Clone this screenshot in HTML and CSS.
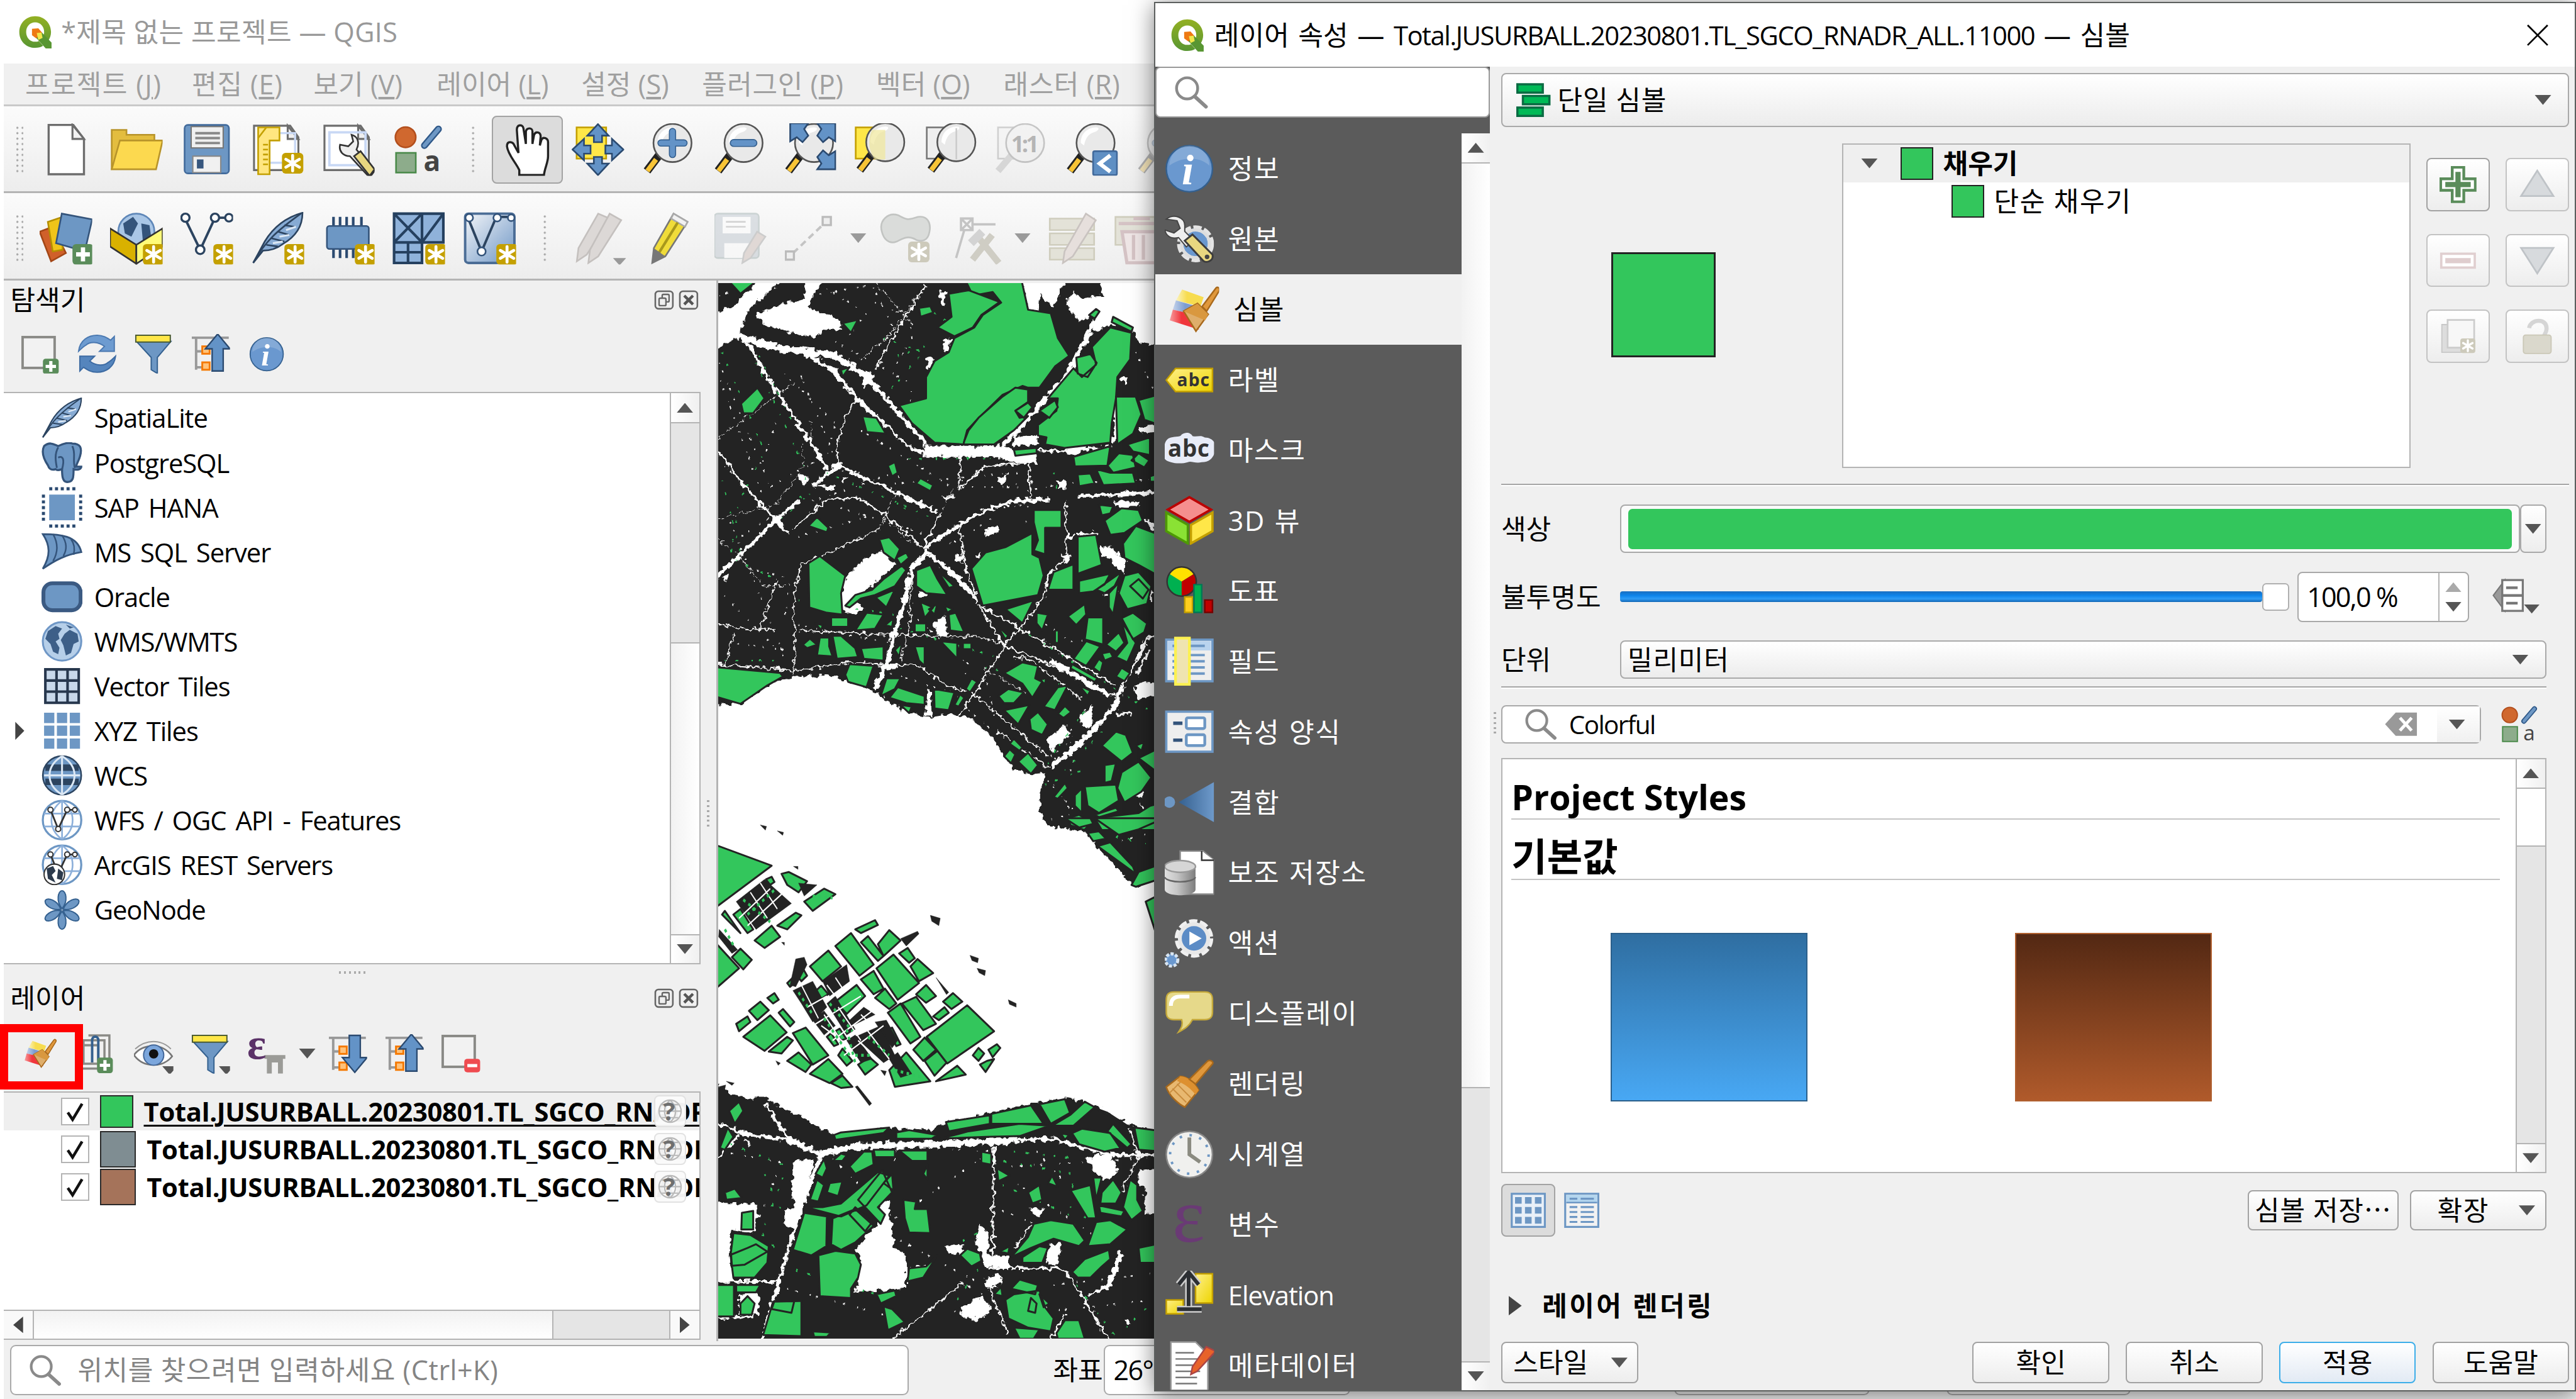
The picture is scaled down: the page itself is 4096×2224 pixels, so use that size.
FILE: index.html
```html
<!DOCTYPE html>
<html lang="ko">
<head>
<meta charset="utf-8">
<title>QGIS</title>
<link rel="stylesheet" href="styles.css">
</head>
<body>
<svg class="sprite" aria-hidden="true">
<defs>
<linearGradient id="gBlue" x1="0" y1="0" x2="1" y2="1"><stop offset="0" stop-color="#f3f5f8"/><stop offset="1" stop-color="#6f97c6"/></linearGradient>
<linearGradient id="gJoin" x1="0" y1="0" x2="1" y2="0"><stop offset="0" stop-color="#35608f"/><stop offset="1" stop-color="#6e9acb"/></linearGradient>
<linearGradient id="gCyl" x1="0" y1="0" x2="1" y2="0"><stop offset="0" stop-color="#e0e0e0"/><stop offset=".4" stop-color="#c6c6c6"/><stop offset="1" stop-color="#7d7d7d"/></linearGradient>
<linearGradient id="gQ" x1="0" y1="0" x2="0" y2="1"><stop offset="0" stop-color="#93b023"/><stop offset="1" stop-color="#589632"/></linearGradient>
<linearGradient id="gGold" x1="0" y1="0" x2="1" y2="1"><stop offset="0" stop-color="#fff08a"/><stop offset="1" stop-color="#edd400"/></linearGradient>
<linearGradient id="gY" x1="0" y1="0" x2="1" y2="0"><stop offset="0" stop-color="#fbf3c0"/><stop offset=".4" stop-color="#f7dc4f"/></linearGradient>
<linearGradient id="gB" x1="0" y1="0" x2="1" y2="0"><stop offset="0" stop-color="#c3d2ea"/><stop offset=".5" stop-color="#7d9cd0"/></linearGradient>
<linearGradient id="gR" x1="0" y1="0" x2="1" y2="0"><stop offset="0" stop-color="#f79a9c"/><stop offset=".4" stop-color="#f0363c"/></linearGradient>
<filter id="rough" x="0" y="0" width="1" height="1"><feTurbulence type="fractalNoise" baseFrequency=".11" numOctaves="2" seed="4"/><feDisplacementMap in="SourceGraphic" scale="14" xChannelSelector="R" yChannelSelector="G"/></filter>
<filter id="rough2" x="0" y="0" width="1" height="1"><feTurbulence type="fractalNoise" baseFrequency=".13" numOctaves="2" seed="9"/><feDisplacementMap in="SourceGraphic" scale="8" xChannelSelector="R" yChannelSelector="G"/></filter>
<g id="star"><rect width="13" height="12.6" rx="2.2" fill="#c4a000"/><path d="M6.500 1.600v9.400M2.400 3.900l8.200 4.800M10.600 3.900L2.400 8.700" stroke="#fff" stroke-width="1.800" stroke-linecap="round"/></g>
<g id="gstar"><rect width="13" height="12.6" rx="2.2" fill="#cdcabb"/><path d="M6.500 1.600v9.400M2.400 3.900l8.200 4.800M10.600 3.900L2.400 8.700" stroke="#fff" stroke-width="1.800" stroke-linecap="round"/></g>
<g id="plusb"><rect width="12.800" height="12.600" rx="2.200" fill="#5a8c5a"/><path d="M6.400 2v8.600M2.200 6.300h8.400" stroke="#fff" stroke-width="2.600"/></g>
<g id="lens"><path d="M11.500 18.500L3.500 29" stroke="#222" stroke-width="5"/><path d="M9 22L3.700 29" stroke="#f8c436" stroke-width="3"/><circle cx="19" cy="12" r="11.600" fill="#e9e9e9" stroke="#555" stroke-width="1"/><path d="M10 12a9 9 0 0 1 9-9.500c3 0 2 2-1 3s-5 3-6 8z" fill="#fff"/></g>
<g id="page"><path d="M3.500 1.500h22l5 7V28.500h-27z" fill="#fff" stroke="#6d6d6d" stroke-width="1.200"/><path d="M24 1.500v8h6.500z" fill="#eee" stroke="#6d6d6d" stroke-width="1.200"/></g>
<g id="wrench"><path d="M1 4l6 3 2 5-3 4-6-3c1 5 6 8 11 6l10 12 5-3-9-12c2-6-1-11-8-12z" transform="translate(0 -1)" fill="#e6e6e6" stroke="#444" stroke-width="1"/><path d="M13 17l5-4L30 25c2 3-3 7-6 5z" fill="#e8d780" stroke="#3c3c3c" stroke-width="1.200"/><circle cx="26" cy="27.500" r="1.500" fill="#444"/></g>
<g id="globe"><circle cx="16" cy="16" r="15" fill="#b6cfe9" stroke="#6f97c6" stroke-width="1.500"/><path d="M5 8l6-4 5 2-3 4 1 4-3 2 3 5-1 5-4-2-2-6-4-4zM18 10l4-3 6 3 1 6-4 2-2 7-4 2-2-8-2-4zM19 3l6 2-3 1z" fill="#3d5f88"/></g>
<g id="feather"><path d="M1 31L8 18C14 8 22 3 31 .5c0 9-5 15-12 19-4 3-8 4-12 4z" fill="#87abd4" stroke="#2c4460" stroke-width="1"/><path d="M1 31C8 18 16 11 30 1M12 16l8 2M16 12l7 2M9 20l7 1M20 8l6 1" fill="none" stroke="#2c4460" stroke-width="1"/><path d="M13 19l6-1M17 15l6-1M21 11l6-2" stroke="#dbe7f4" stroke-width="1.200"/></g>
</defs>
<symbol id="q" viewBox="0 0 32 32"><path d="M16 1C7.500 1 1 7.500 1 16s6.500 15 15 15c3 0 5.500-.8 7.500-2l-4-4.500c-1 .5-2 .7-3.500.7-5 0-8.500-4-8.500-9.200S11 6.800 16 6.800s8.500 4 8.500 9.200c0 1.200-.2 2.300-.6 3.300l4.600 4.700c1.500-2.300 2.500-5 2.500-8 0-8.500-6.500-15-15-15z" fill="url(#gQ)"/><path d="M17 16l5 0 9.500 10v5.500H26L17 21.500z" fill="#589632"/><path d="M13 13l6-.5 3.500 4-5.500 5.500-4-3z" fill="#ee7913"/><path d="M17.500 17l4.500-.5 1 5-4 2z" fill="#f0e64a"/></symbol>
<symbol id="new" viewBox="0 0 32 32"><path d="M5.500 1h15l6.500 8.500V31H5.500z" fill="#fff" stroke="#6d6d6d" stroke-width="1.300"/><path d="M20 1v8.500h7z" fill="#f3f3f3" stroke="#6d6d6d" stroke-width="1.200"/></symbol>
<symbol id="open" viewBox="0 0 32 32"><path d="M1 28V4h9v3h17v4" fill="#e3bd3f" stroke="#b8942a" stroke-width="1"/><path d="M1 28l5-17.500h26L28 28z" fill="#fcd94f" stroke="#b8942a" stroke-width="1"/></symbol>
<symbol id="save" viewBox="0 0 32 32"><rect x="2.500" y="1" width="27" height="29.500" rx="2" fill="#6d97c4" stroke="#416a9b"/><rect x="6.500" y="2" width="19.500" height="13" fill="#f0f0f0" stroke="#777" stroke-width=".8"/><path d="M9 6h15M9 9h15M9 12h15" stroke="#888" stroke-width="1.500"/><rect x="7.500" y="20" width="17" height="10" fill="#f0f0f0" stroke="#888" stroke-width=".8"/><rect x="10" y="22" width="4" height="5.500" fill="#36567e"/></symbol>
<symbol id="layout" viewBox="0 0 32 32"><use href="#page" x="-2"/><path d="M4.500 6h22v18h-22z" fill="none" stroke="#c8d8f5" stroke-width="1.300"/><path d="M4 2.500h13v8H11V31H4z" fill="#ffe680" stroke="#c4a000"/><path d="M4 9l5-6.500M7 13h3M7 16h3M7 19h3M7 22h3M7 25h3" stroke="#c4a000"/><use href="#star" x="17.500" y="18" transform="translate(1 0)"/></symbol>
<symbol id="mgr" viewBox="0 0 32 32"><use href="#page" x="-2"/><path d="M4.500 5.500h22V25.500h-22z" fill="none" stroke="#c8d8f5" stroke-width="1.500"/><path d="M11 13l5 1 3-3-1-4c4 1 5 5 3 9l11 13-3 4-12-13c-4 0-7-3-6-7z" fill="#eee" stroke="#333"/><path d="M19.500 20l4-3 8.500 11-3 4z" fill="#e8d780" stroke="#333"/></symbol>
<symbol id="style" viewBox="0 0 32 32"><circle cx="8" cy="8.500" r="6.200" fill="#d0682f" stroke="#b34f1d"/><path d="M19.500 13.500L28 3.500" stroke="#2f5888" stroke-width="4.200" stroke-linecap="round"/><path d="M19.500 13.500L28 3.500" stroke="#6d97c4" stroke-width="2.400" stroke-linecap="round"/><rect x="2.200" y="18" width="12" height="12" fill="#8dac8b" stroke="#4a8a4a"/></symbol>
<symbol id="hand" viewBox="0 0 32 32"><path d="M11 31.500V28.500C9 24 4 19 3.500 14c0-3.500 3.500-3 4.500-.5L10.500 18 9.500 4C9.500.5 13 .5 13.500 3L15 12.500V5c.5-2.500 4-2.500 4 0V12.500L20 7c1-2.500 4-1.500 4 1L23.500 13.500l1-3.500c1-2 4-1 4 1.500V20c0 4-2 7-2.500 11.500z" fill="#fff" stroke="#222" stroke-width="1.300"/></symbol>
<symbol id="pan" viewBox="0 0 32 32"><rect x="3" y="2.500" width="18" height="19" fill="#ffe748" stroke="#c4a000"/><g fill="#6393c7" stroke="#2b4a70" stroke-width="1"><path d="M16 .5l6.500 7h-4v4h-5v-4h-4zM16 31.500l6.500-7h-4v-4h-5v4h-4zM.5 16l7-6.500v4h4v5h-4v4zM31.500 16l-7-6.500v4h-4v5h4v4z"/></g></symbol>
<symbol id="zin" viewBox="0 0 32 32"><use href="#lens" x="-.5"/><path d="M18.500 5v14M11.500 12h14" stroke="#35608f" stroke-width="4.400" stroke-linecap="round"/><path d="M18.500 5v14M11.500 12h14" stroke="#6393c7" stroke-width="3.200" stroke-linecap="round"/></symbol>
<symbol id="zout" viewBox="0 0 32 32"><use href="#lens" x="-.5"/><path d="M12.500 12h12" stroke="#35608f" stroke-width="4.800" stroke-linecap="round"/><path d="M12.500 12h12" stroke="#6393c7" stroke-width="3.500" stroke-linecap="round"/></symbol>
<symbol id="zfull" viewBox="0 0 32 32"><use href="#lens" x="-.5"/><g fill="#6393c7" stroke="#2b4a70"><path d="M4 0h11l-2.500 3.500 2.500 4-3.500 4L8 8.500 4 11zM31.500 0h-11l2.500 3.500-2.500 4 3.500 4 3.500-3 4 2.500zM31.500 28h-11l2.500-3.500-2.500-4 3.500-4 3.500 3 4-2.500z"/></g></symbol>
<symbol id="zsel" viewBox="0 0 32 32"><rect x="1" y="2.500" width="18" height="19" fill="#ffe748" stroke="#c4a000"/><use href="#lens" x="0" y="-.5"/><path d="M11 4h8v18h-6c-4-4-5-12-2-18z" fill="#f0e79a" opacity=".7"/></symbol>
<symbol id="zlay" viewBox="0 0 32 32"><rect x="1" y="2.500" width="18" height="19" fill="#eee" stroke="#777"/><use href="#lens" x="0" y="-.5"/><path d="M19 3v19" stroke="#ccc"/></symbol>
<symbol id="z11" viewBox="0 0 32 32"><g opacity=".3"><rect x="1.500" y="2.500" width="18" height="19" fill="#eee" stroke="#777"/><path d="M10.500 18.500L1.500 29" stroke="#999" stroke-width="4"/><circle cx="18" cy="12" r="11.600" fill="#e9e9e9" stroke="#555"/></g></symbol>
<symbol id="zlast" viewBox="0 0 32 32"><use href="#lens" x="-1"/><rect x="16.500" y="17" width="14.500" height="14.500" rx="1" fill="#5f8fc3" stroke="#41699a"/><path d="M27 19.500l-6.500 5L27 29.500" fill="none" stroke="#fff" stroke-width="2.400"/></symbol>
<symbol id="addl" viewBox="0 0 32 32"><path d="M0 12l8-3 8 16-9 5z" fill="#d0602a" stroke="#a34717"/><path d="M5 6l9-3v20l-6 1z" fill="#f0c419" stroke="#b48f00"/><path d="M13.500 1L32 4.500 27.500 24 10 19z" fill="#6d97c4" stroke="#34547b"/><use href="#plusb" x="20" y="19.500"/></symbol>
<symbol id="gpkg" viewBox="0 0 32 32"><path d="M0 10l16 8 16-8v11L16 31.500 0 21z" fill="#c9a000"/><circle cx="16" cy="12" r="11" fill="#a9c6e6" stroke="#5f87b8"/><path d="M8 7l6-4 3 4-4 8-4-2zM19 7l5 1 1 7-5 3z" fill="#34547b"/><path d="M0 10l16 10v11.500L0 21z" fill="#d9b100" stroke="#333"/><path d="M32 10L16 20v11.500L32 21z" fill="#fffb78" stroke="#333"/><use href="#star" x="20" y="19.500"/></symbol>
<symbol id="shp" viewBox="0 0 32 32"><path d="M2.500 3.500L12 23 21 3.500h9" fill="none" stroke="#2c4460" stroke-width="1.500"/><g fill="#fff" stroke="#2c4460" stroke-width="1.300"><circle cx="3" cy="3.500" r="2.500"/><circle cx="21" cy="3.500" r="2.500"/><circle cx="29.500" cy="3.500" r="2.300"/><circle cx="12" cy="23" r="2.600"/></g><use href="#star" x="20" y="19.500"/></symbol>
<symbol id="spl" viewBox="0 0 32 32"><use href="#feather"/><use href="#star" x="20" y="19.500"/></symbol>
<symbol id="feath" viewBox="0 0 32 32"><use href="#feather"/></symbol>
<symbol id="mem" viewBox="0 0 32 32"><path d="M7 3v25M11 3v25M15 3v25M19 3v25M24 3v10" stroke="#2b4a70" stroke-width="1.600"/><rect x="3" y="8.500" width="25.500" height="14" rx="1.500" fill="#6d97c4" stroke="#34547b"/><use href="#star" x="20" y="19.500"/></symbol>
<symbol id="mesh" viewBox="0 0 32 32"><rect x="1" y="1" width="30" height="17.500" fill="#6d97c4"/><path d="M1 1h30v17.500H18V31H1zM18 1v17.500H1M1 1l17 17.500M18 1L1 18.500M31 1L18 18.500M1 24.500h17M9.500 18.500V31" fill="#8fb2da" stroke="#25405f" stroke-width="1.600"/><use href="#star" x="20" y="19.500"/></symbol>
<symbol id="virt" viewBox="0 0 32 32"><rect x="1" y="1" width="30" height="30" rx="2" fill="url(#gBlue)" stroke="#4b6d96" stroke-width="1.500"/><path d="M2.500 3L11 24 20 3h10" fill="none" stroke="#2c4460" stroke-width="1.500"/><g fill="#fff" stroke="#34547b"><circle cx="3.500" cy="3.500" r="2.300"/><circle cx="20.500" cy="3.500" r="2.300"/><circle cx="29" cy="3.500" r="2"/><circle cx="11" cy="24" r="2.500"/></g><use href="#star" x="20" y="19.500"/></symbol>
<symbol id="pencils" viewBox="0 0 32 32"><g fill="#dcd8d6" stroke="#c4c0be"><path d="M15 1l7 3L8 26l-6 4 1-8z"/><path d="M22 1l7 4L15 27l-6 4 1-8z"/></g><path d="M24 28h8l-4 4.500z" fill="#999"/></symbol>
<symbol id="pencil" viewBox="0 0 32 32"><path d="M18 1l8.500 5L13 27 5 31l1-9z" fill="#f0dc3a" stroke="#777" stroke-width="1"/><path d="M18 1l8.500 5-1.500 3-8.500-5z" fill="#f1f1f1" stroke="#aaa"/><path d="M20.500 6.500L9 25" stroke="#a8981c" stroke-width="1.600"/><path d="M6 22l7 5-8 4z" fill="#777"/></symbol>
<symbol id="savee" viewBox="0 0 32 32"><g opacity=".45"><rect x="0" y="1" width="27" height="27" rx="2" fill="#bac3cc" stroke="#9aa"/><rect x="5" y="3" width="17" height="10" fill="#fff"/><path d="M7 6h12M7 9h12" stroke="#aaa"/><rect x="6" y="19" width="15" height="9" fill="#fff"/></g><path d="M26 12l5 3-9 13-5 3 1-6z" fill="#e0d8d5" stroke="#ccc"/></symbol>
<symbol id="line" viewBox="0 0 32 32"><path d="M5 25L25 6" stroke="#c4c4c4" stroke-width="1.500" stroke-dasharray="4 2.500"/><path d="M.5 24h5v5h-5zM23 3h5v5h-5z" fill="#eee" stroke="#bbb" stroke-width="1.300"/></symbol>
<symbol id="blob" viewBox="0 0 32 32"><path d="M2 12C0 5 6 0 12 2c5 3 6 3 12 1 6-1 8 4 7 9-1 6-5 6-8 5-5-3-8-1-12 1-5 2-8-2-9-6z" fill="#dadcda" stroke="#c2c4c2"/><use href="#gstar" x="18" y="18"/></symbol>
<symbol id="node" viewBox="0 0 32 32"><path d="M5 4h7v7H5zM5 4l7 7M12 4l-7 7M12 7.500h14M7 11L2 28" fill="none" stroke="#c4c4c4" stroke-width="1.400"/><path d="M12 29l12-15M16 16l12 15" stroke="#cfcdc4" stroke-width="4"/><path d="M11 19l7-7" stroke="#d3d3d3" stroke-width="5"/></symbol>
<symbol id="rows" viewBox="0 0 32 32"><path d="M2 4h27v7H2zM2 13h27v7H2zM2 22h27v7H2z" fill="#e3e2d8" stroke="#cfcdbd"/><path d="M24 1l6 4-14 22-6 4 1-7z" fill="#e6dfdc" stroke="#c9c3c0"/></symbol>
<symbol id="trash" viewBox="0 0 32 32"><path d="M1 3h24v17H1z" fill="#e3e2d8" stroke="#cfcdbd"/><path d="M5 12h25l-3 19H8zM3 7h28M12 4h10M12 14v15M18 14v15" fill="#efe6e6" stroke="#d5c3c5" stroke-width="2"/></symbol>
<symbol id="addbox" viewBox="0 0 32 32"><rect x="1.500" y="2.500" width="26" height="25" fill="#f2f2f2" stroke="#8a8a86" stroke-width="2"/><use href="#plusb" x="18" y="20"/></symbol>
<symbol id="delbox" viewBox="0 0 32 32"><rect x="1.500" y="1.500" width="26" height="25" fill="#f2f2f2" stroke="#8a8a86" stroke-width="2"/><rect x="19" y="20" width="13" height="11" rx="2.500" fill="#ef4b50"/><path d="M21.500 25.500h8" stroke="#fff" stroke-width="2.600"/></symbol>
<symbol id="refresh" viewBox="0 0 32 32"><path d="M1 14C2 5 9 1 16 1c5 0 8 2 11 4l3-3v12H18l4-4c-5-4-12-4-15-1-2 1-4 3-6 5z" fill="#6d9bd0" stroke="#4a78b0"/><path d="M31 18c-1 9-8 13-15 13-5 0-8-2-11-4l-3 3V18h12l-4 4c5 4 12 4 15 1 2-1 4-3 6-5z" fill="#5585bd" stroke="#3c6aa2"/></symbol>
<symbol id="filter" viewBox="0 0 32 32"><path d="M2 6h28L19 19v13l-5-3V19z" fill="#6d97c4" stroke="#34608f"/><rect x="1.500" y="1" width="28" height="5.500" fill="#ffe748" stroke="#4a5a30"/></symbol>
<symbol id="filterd" viewBox="0 0 32 32"><path d="M2 6h28L19 19v13l-5-3V19z" fill="#6d97c4" stroke="#34608f"/><rect x="1.500" y="1" width="28" height="5.500" fill="#ffe748" stroke="#4a5a30"/><path d="M23 26h12l-6 7z" fill="#555"/></symbol>
<symbol id="coll" viewBox="0 0 32 32"><path d="M1 3h30M4.500 3v26M4.500 14h6M4.500 27h6" stroke="#999" stroke-width="2" fill="none"/><rect x="9.500" y="10" width="6" height="6" fill="#ffc27a" stroke="#f57900" stroke-width="1.500"/><rect x="9.500" y="23" width="6" height="6" fill="#ffc27a" stroke="#f57900" stroke-width="1.500"/><path d="M22 0l10 12h-5.500v18h-9V12H12z" fill="#6393c7" stroke="#2b4a70" stroke-width="1.200"/></symbol>
<symbol id="expd" viewBox="0 0 32 32"><path d="M1 3h30M4.500 3v26M4.500 14h6M4.500 27h6" stroke="#999" stroke-width="2" fill="none"/><rect x="9.500" y="10" width="6" height="6" fill="#ffc27a" stroke="#f57900" stroke-width="1.500"/><rect x="9.500" y="23" width="6" height="6" fill="#ffc27a" stroke="#f57900" stroke-width="1.500"/><path d="M22 31l10-12h-5.500V1h-9v18H12z" fill="#6393c7" stroke="#2b4a70" stroke-width="1.200"/></symbol>
<symbol id="info" viewBox="0 0 32 32"><circle cx="16" cy="16" r="15" fill="#6a98cf" stroke="#34608f"/><path d="M3 14a13 13 0 0 1 26 0c-6-6-18-6-26 0z" fill="#fff" opacity=".18"/></symbol>
<symbol id="pg" viewBox="0 0 32 32"><path d="M2 3c5-4 8-1 11 0 4-2 8-3 11-2 6 0 8 3 6 10-1 4-3 6-3 8l4 0c0 2-3 3-6 2 0 6 0 10-5 10-4 0-4-6-4-10-3 1-4 1-5 0-3 1-5 0-6-3C1 12 0 7 2 3z" fill="#6d97c4" stroke="#34547b" stroke-width="1.600"/><path d="M13 4c-3 5-2 11-1 16M24 3c3 6 0 10 2 17M13 12c4-2 5 2 3 9" fill="none" stroke="#34547b" stroke-width="1.400"/></symbol>
<symbol id="hana" viewBox="0 0 32 32"><rect x="6" y="6" width="20" height="20" fill="#6d97c4"/><path d="M6 1.500h21M6 30.500h21M1.500 6v21M30.500 6v21" stroke="#2b4a70" stroke-width="2.400" stroke-dasharray="2.400 2.100"/></symbol>
<symbol id="mssql" viewBox="0 0 32 32"><path d="M1 2c13 0 27 1 30 14-12 2-20 6-30 13 6-10 6-18 0-27z" fill="#6d97c4" stroke="#34547b" stroke-width="1.400"/><path d="M9 2c4 7 4 14 0 21M16 3c4 6 4 11 1 16M23 6c3 4 3 8 2 12" fill="none" stroke="#34547b" stroke-width="1.200"/></symbol>
<symbol id="ora" viewBox="0 0 32 32"><rect x="1.500" y="5.500" width="29" height="21" rx="7" fill="#6d97c4" stroke="#3b5a82" stroke-width="3"/></symbol>
<symbol id="wms" viewBox="0 0 32 32"><use href="#globe"/></symbol>
<symbol id="vt" viewBox="0 0 32 32"><rect x="3" y="3" width="26" height="26" fill="#c8d8ea"/><path d="M3 3h26v26H3zM3 11.700h26M3 20.300h26M11.700 3v26M20.300 3v26" fill="none" stroke="#27374d" stroke-width="2"/></symbol>
<symbol id="xyz" viewBox="0 0 32 32"><path d="M2 2h8v8H2zM12 2h8v8h-8zM22 2h8v8h-8zM2 12h8v8H2zM12 12h8v8h-8zM22 12h8v8h-8zM2 22h8v8H2zM12 22h8v8h-8zM22 22h8v8h-8z" fill="#6d97c4"/></symbol>
<symbol id="wcs" viewBox="0 0 32 32"><circle cx="16" cy="16" r="15" fill="#6d97c4" stroke="#2c4460" stroke-width="1.200"/><path d="M3 10h26M3 21h26" stroke="#2c4460" stroke-width="5"/><path d="M2 16h28M16 1v30M16 1c-13 8-13 22 0 30M16 1c13 8 13 22 0 30" fill="none" stroke="#dce8f5" stroke-width="1.500"/></symbol>
<symbol id="wfs" viewBox="0 0 32 32"><circle cx="16" cy="16" r="15" fill="#fff" stroke="#6d97c4" stroke-width="1.600"/><path d="M2 11h28M2 21h28M16 1v30M16 1c-11 8-11 22 0 30M16 1c11 8 11 22 0 30" fill="none" stroke="#8db0da" stroke-width="1.300"/><path d="M7 8l6 15 7-15h6" fill="none" stroke="#333" stroke-width="1.400"/><g fill="#fff" stroke="#333"><circle cx="7" cy="8" r="2"/><circle cx="20" cy="8" r="2"/><circle cx="26" cy="8" r="1.800"/><circle cx="13" cy="23" r="2"/></g></symbol>
<symbol id="arc" viewBox="0 0 32 32"><use href="#wfs"/><circle cx="10" cy="23.500" r="8" fill="#fff" stroke="#333"/><path d="M4 19l5-2 2 4-3 3 3 6-6-3zM13 19l4 3-1 6-4-1z" fill="#2c3a4c"/></symbol>
<symbol id="geon" viewBox="0 0 32 32"><g fill="#6d97c4" stroke="#34608f"><g id="pt"><path d="M16 15c-5-6-3-14 0-14s5 8 0 14zM16 17c-5 6-3 14 0 14s5-8 0-14z"/></g><use href="#pt" transform="rotate(60 16 16)"/><use href="#pt" transform="rotate(120 16 16)"/></g></symbol>
<symbol id="mag" viewBox="0 0 32 32"><circle cx="12" cy="12.500" r="9.800" fill="none" stroke="#8a8a8a" stroke-width="2.600"/><path d="M19 20l10.500 9.500" stroke="#8a8a8a" stroke-width="3.400" stroke-linecap="round"/></symbol>
<symbol id="float" viewBox="0 0 32 32"><rect x="2" y="2" width="28" height="28" rx="5" fill="none" stroke="#666" stroke-width="2.600"/><rect x="13" y="7" width="11" height="12" rx="2" fill="none" stroke="#666" stroke-width="2.400"/><rect x="8" y="13" width="11" height="12" rx="2" fill="#efefef" stroke="#666" stroke-width="2.400"/></symbol>
<symbol id="close" viewBox="0 0 32 32"><rect x="2" y="2" width="28" height="28" rx="5" fill="none" stroke="#666" stroke-width="2.600"/><path d="M9 9l14 14M23 9L9 23" stroke="#555" stroke-width="4.500"/></symbol>
<symbol id="brushc" viewBox="0 0 32 32"><path d="M8 3l14 5-2 6L4 10z" fill="url(#gY)"/><path d="M4 10l14 4-3 5L2 16z" fill="url(#gB)"/><path d="M2 16l13 3 4 10L0 23z" fill="url(#gR)"/><path d="M9 17l9-5 7 7-8 11z" fill="#dfae6b" stroke="#a8691c"/><path d="M9 17l9-5 7 7-2 4z" fill="#d9983f"/><path d="M21 14l9-12c1-1 3 0 2 2l-8 13z" fill="#e0983c" stroke="#a8691c"/></symbol>
<symbol id="brush" viewBox="0 0 32 32"><path d="M1 18l9-7c5 0 10 5 12 9l-9 11C9 29 3 24 1 18z" fill="#e8b870" stroke="#a8691c"/><path d="M5 19l9 9M8 16l9 9M3 22l10-10" stroke="#c98d3f" stroke-width=".8"/><path d="M10 11c5 0 9 4 12 9l-2 3c-3-4-7-7-12-9z" fill="#dd902f"/><path d="M16 13L28 1c2-1 4 1 3 2L20 16z" fill="#e0983c" stroke="#a8691c"/></symbol>
<symbol id="grp" viewBox="0 0 32 32"><path d="M1 9h16v19H1zM5 5h17v19H5zM9 1h17v19" fill="#f0f0f0" stroke="#8a8a86" stroke-width="1.800"/><path d="M12 23V5c0-4 5-4 5 0v16" fill="none" stroke="#34608f" stroke-width="2"/><use href="#plusb" x="16" y="19"/></symbol>
<symbol id="eye" viewBox="0 0 32 32"><path d="M0 17c7-10 24-10 31 1-7 9-23 10-31-1z" fill="#fff" stroke="#777" stroke-width="1.400"/><circle cx="16" cy="17" r="8.200" fill="#7ba6dc" stroke="#44689a"/><circle cx="16" cy="16" r="3.800" fill="#111"/><path d="M1 12C10 4 22 4 30 12" fill="none" stroke="#999"/><path d="M23 26h12l-6 7z" fill="#555"/></symbol>
<symbol id="eps" viewBox="0 0 32 32"><path d="M14 17h17v3h-2v12h-4v-9h-5v9h-4v-12h-2z" fill="#9b9b97"/></symbol>
<symbol id="src" viewBox="0 0 32 32"><circle cx="20" cy="19" r="10" fill="#6a98cf" stroke="#e4e4e4" stroke-width="4" stroke-dasharray="5 1.500"/><circle cx="20" cy="19" r="9" fill="none" stroke="#ddd" stroke-width="2"/><path d="M1 3c5-4 12-1 12 4l0 4 6 6-5 4-5-6c-5 1-8-1-9-5l6 2 4-3-2-5z" fill="#eee" stroke="#444" stroke-width=".8"/><path d="M13 17l5-4L31 26c1 4-4 6-6 4z" fill="#e8d780" stroke="#3c3c3c" stroke-width="1.200"/><circle cx="27.500" cy="27.500" r="1.500" fill="#444"/></symbol>
<symbol id="lab" viewBox="0 0 32 32"><path d="M1 16l6-7.500h24v15H7z" fill="url(#gGold)" stroke="#c4a000"/></symbol>
<symbol id="mask" viewBox="0 0 32 32"><path d="M4 8c3-1 6 0 7-2 3-2 6-1 7 1 3 1 5-1 8 1 5 0 8 4 7 8s-3 8-9 8c-4 1-7-1-9 0-3 1-8 1-11 0-5-1-6-5-5-8s1-7 5-8z" fill="#e8ecf8"/></symbol>
<symbol id="cube" viewBox="0 0 32 32"><path d="M2 9l14-8 14 8-14 8z" fill="#f58e8e" stroke="#b00" stroke-width="1.500"/><path d="M1 11l14 8v12L1 23z" fill="#8ae234" stroke="#4e9a06" stroke-width="1.500"/><path d="M31 11l-14 8v12l14-8z" fill="#ffe748" stroke="#c4a000" stroke-width="1.500"/></symbol>
<symbol id="diag" viewBox="0 0 32 32"><circle cx="11" cy="10" r="9.500" fill="#00b050"/><path d="M11 10L3 5a9.500 9.500 0 0 1 16 0z" fill="#ffe000"/><path d="M11 10l8-5a9.500 9.500 0 0 1-8 14.500z" fill="#c00000"/><circle cx="11" cy="10" r="9.500" fill="none" stroke="#333"/><path d="M13 20h5v10h-5z" fill="#ffce1f" stroke="#c4a000"/><path d="M19 12h5v18h-5z" fill="#00b050" stroke="#075"/><path d="M26 22h5v8h-5z" fill="#c00000" stroke="#700"/></symbol>
<symbol id="field" viewBox="0 0 32 32"><rect x="1" y="2" width="30" height="27" fill="#eee" stroke="#6d97c4" stroke-width="1.500"/><rect x="2" y="3" width="28" height="6" fill="#b9d3ee"/><path d="M5 6h21M5 12h21M5 16h21M5 20h21M5 24h21" stroke="#6d97c4" stroke-width="1.600"/><rect x="7" y="1" width="9" height="30" fill="#efe4b0" stroke="#fcf151" stroke-width="1.800"/></symbol>
<symbol id="form" viewBox="0 0 32 32"><rect x="1" y="3" width="30" height="26" fill="#eee" stroke="#6d97c4" stroke-width="1.500"/><path d="M5.500 10.500h6M5.500 21.500h6" stroke="#34547b" stroke-width="2.200"/><rect x="14" y="7" width="12" height="7" rx="1" fill="#fff" stroke="#6d97c4" stroke-width="1.800"/><rect x="14" y="18" width="12" height="7" rx="1" fill="#fff" stroke="#6d97c4" stroke-width="1.800"/></symbol>
<symbol id="join" viewBox="0 0 32 32"><circle cx="3" cy="16" r="3.700" fill="#6d97c4"/><path d="M9 16L32 3v26z" fill="url(#gJoin)"/></symbol>
<symbol id="aux" viewBox="0 0 32 32"><path d="M10 2h15l7 6v22H10z" fill="#fff" stroke="#888"/><path d="M24 2v6h8" fill="#fff" stroke="#333"/><path d="M0 12v15c0 5 20 5 20 0V12z" fill="url(#gCyl)"/><ellipse cx="10" cy="12" rx="10" ry="3.800" fill="#d6d6d6" stroke="#999"/><path d="M0 19c2 4 18 4 20 0" fill="none" stroke="#666"/></symbol>
<symbol id="act" viewBox="0 0 32 32"><circle cx="19" cy="13" r="10.500" fill="#5c8cc6" stroke="#f0f0f0" stroke-width="4" stroke-dasharray="5 1.600"/><circle cx="19" cy="13" r="9.200" fill="none" stroke="#e8e8e8" stroke-width="2.500"/><path d="M16 8.500l8 4.500-8 4.500z" fill="#fff"/><circle cx="4.500" cy="27" r="4" fill="#6a98cf" stroke="#d8e4f0" stroke-width="2" stroke-dasharray="2 1"/></symbol>
<symbol id="tip" viewBox="0 0 32 32"><path d="M6 2h20c4 0 5 2 5 5v8c0 3-1 5-5 5h-8c-2 4-5 6-9 8 2-3 3-5 2-8H6c-4 0-5-2-5-5V7c0-3 1-5 5-5z" fill="#e6d98a" stroke="#c4a83a"/><path d="M4 11c0-4 2-6 6-6h6" fill="none" stroke="#fff" stroke-width="2.500"/></symbol>
<symbol id="clock" viewBox="0 0 32 32"><circle cx="16" cy="16" r="15" fill="#f0f0ee" stroke="#888"/><circle cx="16" cy="16" r="12.500" fill="none" stroke="#6d97c4" stroke-width="1.600" stroke-dasharray="1.600 4.940"/><path d="M16 5v11l7 5" fill="none" stroke="#8a8a80" stroke-width="2.400"/></symbol>
<symbol id="elev" viewBox="0 0 32 32"><rect x="20" y="2" width="11" height="19" fill="url(#gGold)" stroke="#c4a000"/><rect x="1" y="19" width="11" height="9" fill="url(#gGold)" stroke="#c4a000"/><path d="M9 9l6.500-8L22 9M15.500 3v20M8 25h16" fill="none" stroke="#ccc" stroke-width="4.500"/><path d="M9 9l6.500-8L22 9M15.500 3v20M8 25h16" fill="none" stroke="#2c2f33" stroke-width="2.400"/></symbol>
<symbol id="meta" viewBox="0 0 32 32"><path d="M4 1h16l8 8v24H4z" fill="#fff" stroke="#999"/><path d="M7 8h12M7 12h16M7 16h16M7 20h16M7 24h14M7 28h14" stroke="#777"/><path d="M27 4l6 3-12 13-4 2 1-5z" fill="#e8622a" stroke="#a44"/></symbol>
<symbol id="single" viewBox="0 0 32 32"><path d="M1 2h23v7.500H1zM6 12.500h24V20H6zM1 23h23v7.500H1z" fill="#00b956" stroke="#0b6b43" stroke-width="2"/></symbol>
<symbol id="badd" viewBox="0 0 32 32"><path d="M11 1h10v10h10v10H21v10H11V21H1V11h10z" fill="#fff" stroke="#5a8c5a" stroke-width="2.400"/><path d="M16 5v22M5 16h22" stroke="#5a8c5a" stroke-width="4.500"/></symbol>
<symbol id="bdel" viewBox="0 0 32 32"><path d="M1.500 10h29v12h-29z" fill="#fff" stroke="#e0cfd0" stroke-width="2"/><path d="M5 16h22" stroke="#dfcdce" stroke-width="4.500"/></symbol>
<symbol id="bup" viewBox="0 0 32 32"><path d="M16 4l14 22H2z" fill="#d7dadd" stroke="#bfc3c7" stroke-width="1.500"/></symbol>
<symbol id="bdn" viewBox="0 0 32 32"><path d="M16 27L2 5h28z" fill="#d7dadd" stroke="#bfc3c7" stroke-width="1.500"/></symbol>
<symbol id="bdup" viewBox="0 0 32 32"><path d="M2 6h20v24H2z" fill="#ddd" stroke="#c8c8c8"/><path d="M7 2h23v24H7z" fill="#f7f7f7" stroke="#ccc" stroke-width="1.500"/><use href="#gstar" x="18" y="18"/></symbol>
<symbol id="block" viewBox="0 0 32 32"><path d="M9 9c1-8 16-9 15 1 0 3-2 4-2 6" fill="none" stroke="#d5d5d5" stroke-width="3.600"/><rect x="4" y="15" width="24" height="16" rx="2" fill="#dad8cc" stroke="#cac7b6"/></symbol>
<symbol id="dd" viewBox="0 0 32 32"><path d="M7 3v24L-2 15z" fill="#999" stroke="#777"/><rect x="5" y="3" width="16" height="24" fill="#fff" stroke="#777" stroke-width="1.600"/><path d="M8 9h9M8 21h9M5 15h16" stroke="#777" stroke-width="2"/><path d="M22 22h12l-6 7z" fill="#555"/></symbol>
<symbol id="clr" viewBox="0 0 32 24"><path d="M10 1h20v22H10L0 12z" fill="#999"/><path d="M14 6l11 12M25 6L14 18" stroke="#fff" stroke-width="3"/></symbol>
<symbol id="gridv" viewBox="0 0 32 32"><rect x="1" y="1" width="30" height="30" fill="#e9f0f8" stroke="#6d97c4" stroke-width="1.800"/><g fill="#6d97c4"><path d="M4 4h6v6H4zM13 4h6v6h-6zM22 4h6v6h-6zM4 13h6v6H4zM13 13h6v6h-6zM22 13h6v6h-6zM4 22h6v6H4zM13 22h6v6h-6zM22 22h6v6h-6z"/></g></symbol>
<symbol id="listv" viewBox="0 0 32 32"><rect x="1" y="1" width="30" height="30" fill="#f2f2f2" stroke="#6d97c4" stroke-width="1.800"/><rect x="2" y="2" width="28" height="7" fill="#b4d6ef"/><path d="M2 9h28" stroke="#6d97c4" stroke-width="1.500"/><path d="M5 5.500h7M15 5.500h12M5 13h7M15 13h12M5 17.500h7M15 17.500h12M5 22h7M15 22h12M5 26.500h7M15 26.500h12" stroke="#6d97c4" stroke-width="1.800"/></symbol>
<symbol id="crs" viewBox="0 0 32 32"><g fill="none" stroke="#b9b9b9" stroke-width="1.500"><circle cx="16" cy="16" r="12"/><path d="M4 16h24M7 9h18M7 23h18M16 4c-8 7-8 17 0 24M16 4c8 7 8 17 0 24"/></g></symbol>
<symbol id="x" viewBox="0 0 32 32"><path d="M1 1l30 30M31 1L1 31" stroke="#000" stroke-width="2.600"/></symbol>
<symbol id="check" viewBox="0 0 32 32"><path d="M7 17l6 9L25 6" fill="none" stroke="#111" stroke-width="3.600"/></symbol>
</svg>

<div class="window">
  <header class="titlebar"><svg class="logo"><use href="#q"/></svg><span class="t-title">*제목 없는 프로젝트 — QGIS</span></header>
  <nav class="menubar">
    <span class="m1">프로젝트 (<u>J</u>)</span><span class="m2">편집 (<u>E</u>)</span><span class="m3">보기 (<u>V</u>)</span><span class="m4">레이어 (<u>L</u>)</span><span class="m5">설정 (<u>S</u>)</span><span class="m6">플러그인 (<u>P</u>)</span><span class="m7">벡터 (<u>O</u>)</span><span class="m8">래스터 (<u>R</u>)</span>
  </nav>
  <div class="toolbar tb1">
    <i class="grip g0"></i>
    <b><svg><use href="#new"/></svg></b><b><svg><use href="#open"/></svg></b><b><svg><use href="#save"/></svg></b><b><svg><use href="#layout"/></svg></b><b><svg><use href="#mgr"/></svg></b><b><svg viewBox="0 0 32 32"><use href="#style"/><text x="19" y="29" font-size="17" class="latin" fill="#444">a</text></svg></b>
    <i class="grip g1"></i>
    <b class="on"><svg><use href="#hand"/></svg></b><b><svg><use href="#pan"/></svg></b><b><svg><use href="#zin"/></svg></b><b><svg><use href="#zout"/></svg></b><b><svg><use href="#zfull"/></svg></b><b><svg><use href="#zsel"/></svg></b><b><svg><use href="#zlay"/></svg></b><b><svg viewBox="0 0 32 32"><use href="#z11"/><text x="9.500" y="17.500" font-size="14" class="latin" font-weight="bold" fill="#b5b5b5" textLength="17">1:1</text></svg></b><b><svg><use href="#zlast"/></svg></b><b class="dim"><svg><use href="#zin"/></svg></b>
  </div>
  <div class="toolbar tb2">
    <i class="grip g0"></i>
    <b><svg><use href="#addl"/></svg></b><b><svg><use href="#gpkg"/></svg></b><b><svg><use href="#shp"/></svg></b><b><svg><use href="#spl"/></svg></b><b><svg><use href="#mem"/></svg></b><b><svg><use href="#mesh"/></svg></b><b><svg><use href="#virt"/></svg></b>
    <i class="grip g2"></i>
    <b><svg><use href="#pencils"/></svg></b><b><svg><use href="#pencil"/></svg></b><b><svg><use href="#savee"/></svg></b><b><svg><use href="#line"/></svg></b><em><i class="dn pale"></i></em><b><svg><use href="#blob"/></svg></b><b class="nudge"><svg><use href="#node"/></svg></b><em><i class="dn pale"></i></em><b class="nudge"><svg><use href="#rows"/></svg></b><b><svg><use href="#trash"/></svg></b>
  </div>
  <div class="work">
    <div class="docks">
      <section class="dock browser">
        <div class="dockhead"><span>탐색기</span><svg><use href="#float"/></svg><svg><use href="#close"/></svg></div>
        <div class="docktools"><b><svg><use href="#addbox"/></svg></b><b><svg><use href="#refresh"/></svg></b><b><svg><use href="#filter"/></svg></b><b><svg><use href="#coll"/></svg></b><b><svg class="inf" viewBox="0 0 32 32"><use href="#info"/><text x="11" y="26" font-size="28" class="serif" font-weight="bold" font-style="italic" fill="#fff">i</text></svg></b></div>
        <div class="tree">
          <ul>
            <li><svg><use href="#feath"/></svg><span>SpatiaLite</span></li>
            <li><svg><use href="#pg"/></svg><span>PostgreSQL</span></li>
            <li><svg><use href="#hana"/></svg><span>SAP HANA</span></li>
            <li><svg><use href="#mssql"/></svg><span>MS SQL Server</span></li>
            <li><svg><use href="#ora"/></svg><span>Oracle</span></li>
            <li><svg><use href="#wms"/></svg><span>WMS/WMTS</span></li>
            <li><svg><use href="#vt"/></svg><span>Vector Tiles</span></li>
            <li class="parent"><svg><use href="#xyz"/></svg><span>XYZ Tiles</span></li>
            <li><svg><use href="#wcs"/></svg><span>WCS</span></li>
            <li><svg><use href="#wfs"/></svg><span>WFS / OGC API - Features</span></li>
            <li><svg><use href="#arc"/></svg><span>ArcGIS REST Servers</span></li>
            <li><svg><use href="#geon"/></svg><span>GeoNode</span></li>
          </ul>
          <div class="vbar"><div class="cap"><i class="up"></i></div><div class="seg grey"></div><div class="seg light"></div><div class="cap"><i class="dn"></i></div></div>
        </div>
      </section>
      <div class="split"></div>
      <section class="dock layers">
        <div class="dockhead"><span>레이어</span><svg><use href="#float"/></svg><svg><use href="#close"/></svg></div>
        <div class="docktools"><b><svg class="sm"><use href="#brushc"/></svg></b><b><svg><use href="#grp"/></svg></b><b><svg><use href="#eye"/></svg></b><b><svg><use href="#filterd"/></svg></b><b><svg viewBox="0 0 32 32"><use href="#eps"/><text x="0" y="20" font-size="36" class="serif" fill="#5b3268">ε</text></svg></b><em><i class="dn"></i></em><b><svg><use href="#expd"/></svg></b><b><svg><use href="#coll"/></svg></b><b><svg><use href="#delbox"/></svg></b></div>
        <div class="layerlist">
          <div class="row cur"><svg class="cb"><use href="#check"/></svg><i class="sw c1"></i><span>Total.JUSURBALL.20230801.TL_SGCO_RNADR</span><svg class="crs" viewBox="0 0 32 32"><use href="#crs"/><text x="8.500" y="26" font-size="27" class="latin" font-weight="bold" fill="#6f6f6f">?</text></svg></div>
          <div class="row"><svg class="cb"><use href="#check"/></svg><i class="sw c2"></i><span>Total.JUSURBALL.20230801.TL_SGCO_RNADR</span><svg class="crs" viewBox="0 0 32 32"><use href="#crs"/><text x="8.500" y="26" font-size="27" class="latin" font-weight="bold" fill="#6f6f6f">?</text></svg></div>
          <div class="row"><svg class="cb"><use href="#check"/></svg><i class="sw c3"></i><span>Total.JUSURBALL.20230801.TL_SGCO_RNADR</span><svg class="crs" viewBox="0 0 32 32"><use href="#crs"/><text x="8.500" y="26" font-size="27" class="latin" font-weight="bold" fill="#6f6f6f">?</text></svg></div>
        </div>
        <div class="hbar"><div class="cap"><i class="lf"></i></div><div class="seg light"></div><div class="seg grey"></div><div class="cap"><i class="rt"></i></div></div>
        <div class="redbox"></div>
      </section>
    </div>
    <div class="vsplit"></div>
    <svg class="map" viewBox="1228 485 748 1805" preserveAspectRatio="none">
      <rect x="1228" y="485" width="748" height="1805" fill="#232323"/>
      <g filter="url(#rough)">
      <g transform="translate(1220 470) scale(.4847 .6059)">
        <g fill="#fff">
          <path d="M-20 120L80 85 175 0H260L120 105 95 160 60 190-20 220zM150 115L230 85 320 70 325 0H400L330 90 400 115 450 130V158L400 155 350 178 270 165 180 140zM1085 0H1250L1200 95 1150 55 1145 105 1105 100zM1245 80L1270 45 1300 70 1370 60V0H1590V205L1500 190 1470 150 1400 140 1370 155 1340 160 1350 110 1290 135z"/>
          <path d="M-20 1212L95 1215 200 1155 270 1138 400 1130 540 1165 590 1190 680 1235 760 1250 865 1240 920 1262 985 1305 1025 1360 1060 1395 1120 1412 1170 1408 1150 1470 1150 1580H-20z"/>
          <path d="M455 870L480 840 540 800 600 780 640 820 600 850 540 890 490 920 530 940 510 960 465 955 455 920zM300 560L335 575 320 595 300 580zM955 725L1000 710 1008 728 960 742zM810 180L845 185 820 225 808 215zM795 50L820 45 815 90 800 75zM750 235L778 240 760 270zM1360 765L1400 770 1455 810 1450 840 1420 825 1400 800 1370 795zM775 985L820 960 822 1020 800 1025zM720 890H755V910H720zM1060 460L1140 455 1145 480 1060 485zM1215 580H1243V605H1215zM1000 570L1035 572 1025 592 1005 585zM750 1175H768L772 1245H745zM1430 290L1465 295 1455 310zM1410 370L1425 360 1432 440 1410 480 1402 472 1415 440zM1480 1160L1558 1150V1190L1500 1200zM1520 690L1558 700V730zM1500 430L1558 425V445L1510 450zM805 625H845L825 645zM1250 487L1315 483 1290 505H1245zM1415 640H1500V657H1415zM1180 1310L1240 1270 1260 1300 1190 1345zM1290 1245L1340 1215 1330 1280 1300 1270zM370 590L430 600 410 615zM1230 790L1262 800 1240 818zM855 790l25 5-5 20-20-5zM925 795l18-8-4 22zM450 570l25 5-15 12zM30 855l20-10-5 20zM650 460l25 10-15 10zM1480 1470l40-18-10 25zM1500 1490l30 20v20z"/>
        </g>
        <g fill="none" stroke="#fff" stroke-linejoin="round">
          <path stroke-width="18" d="M0 150L100 178 230 208 430 230 545 290"/>
          <path stroke-width="12" d="M330 225L420 270 505 350 600 420"/><path stroke-width="8" d="M600 420L650 455M655 465L710 495 780 515"/>
          <path stroke-width="12" d="M545 290L640 380 750 478"/><path stroke-width="30" d="M550 275L540 315"/>
          <path stroke-width="32" d="M745 500L880 500 1010 500 1060 515 1140 520"/>
          <path stroke-width="16" d="M1010 490L1060 450 1150 370 1240 295 1290 220 1360 110"/>
          <path stroke-width="10" d="M115 190L235 345 335 465 400 550"/>
          <path stroke-width="7" d="M10 490L100 590 220 695 270 735"/>
          <path stroke-width="12" d="M0 860L90 795 225 690 300 640M350 595L440 540"/>
          <path stroke-width="9" d="M440 540L600 600 790 670"/>
          <path stroke-width="22" d="M425 545L455 540M215 690L235 695"/>
          <path stroke-width="10" d="M740 775L860 710 960 665 1060 640 1190 635M1285 628L1590 613"/>
          <path stroke-width="15" d="M760 780L700 830 665 950 635 1020 610 1105 570 1165M590 1110L650 1105"/>
          <path stroke-width="13" d="M760 790L860 855 930 920"/><path stroke-width="6" d="M930 930L1060 990"/>
          <path stroke-width="5" d="M940 940L980 990 1030 1050 1130 1080 1420 1190M1020 1050L1050 1030M1060 990L1420 1160"/>
          <path stroke-width="14" d="M1190 1390L1300 1320 1420 1215 1440 1160M1190 1090L1400 1190"/>
          <path stroke-width="5" d="M505 355L460 410 438 480V540M570 270L650 155 750 30M740 770L800 680M860 610L960 540 1110 535M1115 530L1120 630M870 490V600M870 710L880 800 930 915M740 775L640 700 510 630 400 635 280 720M1030 1050L870 1240M1170 905L1050 1030M1170 905L1180 850 1245 800V640"/>
          <path stroke-width="3.500" d="M10 985L90 1000 215 1003M300 1005L640 1018 930 1022 1030 1045M285 1130V900L310 815 440 775 590 715M225 860L165 1000M10 1100L285 1118 420 1105 480 1095 610 1100 730 1105 820 1160 920 1185 1180 1360M700 850L690 1000 660 1090M1000 1290L1180 1390M1060 1080L1110 1085 1220 1150 1300 1200M75 1010L40 1100"/>
          <path stroke-width="2" stroke-dasharray="14 5" d="M520 240L620 170 720 60M10 465L210 350 280 310M10 690L130 670 220 650 320 540 310 480M90 795L175 878H255M640 620L590 710M10 740L90 795M340 410L345 460M570 20L700 140M620 700L700 760M950 1110L1100 1180M800 680L850 600"/>
          <path stroke-width="7" d="M1590 1000L1530 1030 1480 1110 1440 1170M1540 1060L1490 1130M1420 1240H1475M1380 905L1540 880M1145 495L1240 500 1400 485M1360 730L1280 735M1245 740H1270M1540 880L1545 930"/>
        </g>
      </g>
      <g transform="translate(1220 1400) scale(.4847 .6333)">
        <path fill="#fff" d="M-20-20H1150L1180 22 1310 35 1340 65 1410 125 1490 187 1590 155V850L1470 828 1320 765 1240 755 1100 775 830 820 760 845 620 835 425 855 320 810 180 755 90 755-20 700z"/>
        <g fill="#fff">
          <path d="M285 925L355 920 335 1010 310 1060 290 1110 250 1100 250 1055 290 1050 275 1020zM-20 1040L150 1040 160 1075 140 1120 65 1110 55 1180 75 1250H-20zM590 1045L620 1030 625 1090 640 1160 680 1180V1270L500 1280 520 1200 500 1165 560 1110 600 1080zM1310 915L1400 905 1425 950 1410 970 1370 975zM1500 950L1590 945V1060L1520 1070 1530 1000 1500 985zM925 1150L940 1095 970 1120 970 1180 1040 1185 1045 1215 960 1210zM820 1155L880 1150 870 1175 830 1175zM1185 1150L1230 1145 1210 1210 1170 1200zM1115 1055L1170 1050 1150 1080zM870 1320L950 1290 985 1330 930 1355 880 1345zM955 1245L1010 1230 1020 1255 965 1270zM1385 1260L1430 1170 1445 1180 1400 1270 1320 1290zM90 1285L160 1285V1340H90zM110 870l20 5-5 12zM1450 1360l15-5v12zM690 1215l60-10v8l-55 10z"/>
        </g>
        <g fill="none" stroke="#fff">
          <path stroke-width="17" d="M380 905L500 885 800 880 1080 868"/><path stroke-width="9" d="M1080 868L1200 865 1330 895 1430 910 1590 910M180 770L260 860 380 905M10 820L100 850 260 870 380 910"/>
          <path stroke-width="11" d="M380 905L290 1100 230 1250 165 1420"/><path stroke-width="6" d="M0 1250H225M0 1350L140 1345M90 855L10 920M640 895V920M990 885L985 1180M970 1215L1220 1215 1260 1240 1400 1415M1470 840L1500 910M1240 1340L1190 1405M1400 1260L1320 1290"/>
          <path stroke-width="4" d="M630 1405L880 1255M1060 1160L1120 1100M1500 910L1440 1010M1040 1390L970 1270"/>
        </g>
      </g>
      </g>
      <g transform="translate(1220 470) scale(.4847 .6059)" fill="none" stroke-width="4" filter="url(#rough2)">
          <path stroke="#fff" stroke-dasharray="3 21 6 34 2 13 8 27 4 40" d="M20 250L200 600 420 500 300 270M60 700L250 1080 30 900M220 420L160 560M350 60L560 30 640 160 540 230M430 190L700 310 690 420M520 440L840 600 1090 600M620 700L840 760 980 690M1110 610L1240 590 1540 580M300 990L620 1040M700 960L900 1100 860 1200M1100 950L1270 1040 1400 1010M1200 1440L1300 1560M1220 60L1360 110M1490 220L1550 320M450 660L700 720M20 60L90 40M600 1120L840 1180M25 300L180 640M40 540L210 680 60 760M250 280L430 420 400 520M300 740L560 680M350 640L640 560 680 600M570 80L690 120 700 180 640 260M400 40L540 110 480 170M130 830L270 860 250 980M60 1040L260 1060M640 590L1080 560 1060 610M1000 660L1110 650 1100 720M1180 1430L1280 1520 1180 1540M1240 1300L1330 1240M1190 1360L1260 1320M1260 1400L1290 1320 1380 1260M1460 1000L1550 1060M960 1130L1000 1280M900 1230L990 1290"/>
          <path stroke="#31c45c" stroke-dasharray="4 33 8 49 5 21 10 37" d="M30 220L180 500 90 640 60 800 220 860M150 250L330 560 300 650M600 180L740 220 620 330M30 580L100 800M400 560L780 690M640 640L720 690M690 520L980 520M780 110L840 140M660 1000L1000 1080M1080 1000L1558 1240M1200 560L1220 640M960 1110L1240 1160M1170 1440L1300 1400M300 920L640 960M40 1090L240 1090M160 230L300 450M240 690L340 620M650 230L760 200M1240 1400L1370 1290M1220 1330L1330 1210M1180 1380L1230 1310"/>
      </g>
      <g transform="translate(1220 1400) scale(.4847 .6333)" fill="none" stroke-width="4" filter="url(#rough2)">
          <path stroke="#fff" stroke-dasharray="4 27 8 43 3 19 6 60" d="M30 900L240 930 150 1100M420 920L640 1080 980 900M660 1140L900 1240 1200 1330 1558 1300M1000 950L1350 1130 1540 1000M1020 1060L1280 1140M1050 940L1500 920M260 1270L600 1340M1200 1260L1540 1230M1440 60L1540 40M870 1250L960 1290M1140 900L1260 1000M850 1330L980 1350M760 890L980 900"/>
          <path stroke="#31c45c" stroke-width="5" stroke-dasharray="6 37 11 51 4 29" d="M60 880L260 940 170 1120 240 1180M980 920L1270 960 1260 1080M1020 990L1280 1080M880 1140L980 1100M860 1300L940 1210M1280 1260L1420 1400 1558 1300M1420 50L1540 70M290 1220L640 1300M1060 900L1300 920M1270 1100L1340 1060M180 960L240 1060"/>
      </g>
      <g transform="translate(1220 470) scale(.4847 .6059)">
        <g class="par">
          <path d="M55 20H150L95 55zM97 365L155 320 180 350 140 392H105zM455 138L510 128 485 165zM525 400L575 405 608 450 540 445zM655 370L750 350V290L780 245 830 220 850 180 920 150 950 115 1015 80 985 50 915 60 885 10H1085L1110 100 1190 110 1215 180 1255 230 1205 260 1150 320 1110 320 1090 315 1020 340 930 410 895 440 882 480 780 475 700 420z"/>
          <path d="M885 470L900 440 935 405 1020 345 1065 320 1110 325V360L1065 385 1080 405 1110 400 1060 440 990 480H882zM1145 425L1210 385 1215 350 1180 350 1270 265 1300 290 1350 255 1335 205 1400 150 1475 165 1470 240 1425 290 1420 350 1405 420 1400 475 1240 490 1170 480 1175 460 1145 455zM1280 235L1330 225 1352 250 1320 290 1285 280zM725 95L765 90 775 108 730 120zM830 55L900 45 1010 78 945 115 915 150 850 175 790 150 840 120zM1410 120L1480 150 1475 162 1405 135zM1325 115L1350 98 1362 105 1345 125zM450 270L480 262 455 290zM615 540L640 530 650 560 630 570zM715 590L730 575 775 595 765 612zM1060 495L1140 490V505L1065 512zM335 710L365 685 405 715 400 728zM585 748L620 742 658 775 640 808 600 785z"/>
          <path d="M335 815L375 795 465 850 450 900 455 960 400 955 338 940zM465 935L500 905 560 890 600 860 665 822 680 835 640 880 570 905 520 915 480 940zM572 912L640 890 610 940zM645 800L680 785 690 800 660 820zM715 835L765 820 790 860 825 905 750 900 715 880zM790 835L850 880 830 885zM500 1005L540 955 600 960 570 1000zM415 968H475V995H415zM365 1075L375 1025H408V1050L420 1078zM420 1020H450L500 1055 510 1080 435 1085zM520 1055L600 1050V1090L530 1085zM315 1045L340 1028 365 1045 330 1055zM465 1130L480 1100 565 1105 540 1165 475 1150zM0 1108L235 1125 245 1135 190 1160 95 1212 0 1190zM590 1190L610 1140 660 1140 640 1170zM620 1195L650 1165 745 1190V1215L680 1210zM778 1170L850 1180 830 1230 780 1225zM660 1215L700 1220 690 1238zM850 1215L870 1185 885 1195 865 1220zM890 1170L910 1140 930 1150 905 1180zM710 985H750V1010H710zM830 960L855 955 885 1010 835 1005zM800 1035L860 1040V1085zM710 1050L745 1050V1105L725 1090zM730 925L775 940 745 970zM880 1040H910V1058H880zM760 945L790 930 780 960zM640 1060L665 1040 655 1080zM815 935l30 10-20 10zM605 990l30-20-5 25zM360 985l25 5-5 15z"/>
          <path d="M910 830L960 785 1030 770 1125 730V790L1150 800 1165 850 1145 905 950 935zM1030 945L1130 920 1090 985zM1130 665H1228V715H1170V790L1130 780 1145 750 1130 700zM1180 890L1200 840 1270 818V890zM1285 740L1350 735 1370 820 1285 845zM1065 385L1110 362 1125 375 1095 405zM1150 385L1205 355 1215 375 1185 405zM1270 515L1400 485 1390 540 1275 542zM1285 565L1330 562 1345 590 1290 598zM1350 550L1400 560 1480 560 1490 590 1375 595zM1390 540L1430 505 1480 510 1490 545 1410 560zM1460 480L1540 460V510L1480 500zM1475 525L1500 505 1538 525 1520 545zM1420 345H1490L1510 395 1480 450 1425 480zM1500 355L1590 335V430L1520 410zM1360 650L1410 655 1400 675 1370 680zM1380 695L1440 660 1500 665 1515 695 1450 730 1400 735zM1445 760L1490 710 1590 740V860L1500 820 1450 800zM1290 865L1400 845 1380 875 1340 895 1290 900zM1350 890L1440 840 1415 880 1380 900zM1395 900L1430 870 1410 960 1395 940zM1430 900L1450 850 1500 840 1545 880 1530 930 1460 945zM1470 880L1500 860 1535 890 1515 915zM1540 570l40-10v25h-40z"/>
          <path d="M1250 965L1310 930 1315 960 1280 990zM1140 955L1180 960 1160 1005 1140 985zM1310 1030L1320 968H1375V1045zM1270 1085L1315 1035 1365 1050 1315 1105zM1205 1005H1218V1040H1205zM1385 1045L1430 1010 1450 1040 1420 1065zM1420 1080L1460 1040 1440 980 1490 1040 1460 1095zM1440 970L1480 955 1530 985 1520 1010 1480 1030zM1340 1110L1360 1085 1375 1095 1365 1125zM1420 1135L1440 1110 1470 1125 1450 1148zM1370 1070L1400 1065 1410 1080 1380 1090zM1000 990L1040 1020 1030 1030zM1265 1100L1355 1140 1345 1150 1260 1112zM1290 1160L1330 1175 1320 1190zM1025 1125L1090 1095 1145 1105 1135 1140 1160 1150 1125 1195 1090 1155zM1005 1190L1040 1170 1095 1180 1060 1210 1025 1210zM1025 1230L1115 1215 1075 1270zM1165 1220L1215 1165 1250 1160 1205 1230zM1215 1240L1240 1218 1262 1235 1235 1252zM1115 1255L1145 1235 1180 1270 1160 1300 1120 1285zM1045 1325L1060 1310 1090 1335 1080 1345zM1025 1360L1045 1340 1065 1355 1050 1380zM1075 1375L1110 1350 1145 1385 1120 1410z"/>
          <path d="M1370 1330L1420 1290 1455 1300 1480 1350 1440 1375zM1380 1435V1385L1420 1380 1405 1430zM1425 1450L1440 1405 1500 1375 1545 1420 1510 1460 1450 1490zM1310 1445L1420 1440 1430 1485 1360 1520 1320 1500zM1275 1470L1300 1450V1520L1275 1500zM1490 1330L1520 1320 1510 1345zM1500 1365L1590 1330V1420zM1200 1475L1240 1435 1250 1450 1215 1480zM1250 1535L1290 1525 1330 1545 1310 1568 1260 1555zM1345 1535L1500 1520 1540 1500 1590 1490V1568H1370zM1345 1525L1420 1505 1430 1515 1360 1532z"/>
        </g>
      </g>
      <g transform="translate(1220 1400) scale(.4847 .6333)">
        <g class="par">
          <path d="M0 70L205 128 0 245zM0 330L90 405 0 465zM1320 40L1360 35 1385 55 1340 62zM1355 75L1400 65 1480 130 1490 150zM1475 180L1500 145 1590 120V160L1490 185zM1525 225L1590 200V380zM1345 0H1590L1500 30 1430 45zM1240 0H1330L1340 15 1290 25z"/>
          <path d="M240 150L265 145 330 170 300 200 260 180zM320 225L390 190 430 205 350 250zM145 330L205 290 235 320 180 350zM65 375L95 352 135 382 105 408zM225 290L290 255 310 262 260 300zM70 260L95 245 140 300 120 310zM30 260L40 250 95 310zM185 165L205 158 215 172 200 180zM430 345L485 310 565 395 515 425zM500 300L570 275 580 288 520 310zM520 335L545 318 600 372 580 385zM580 340L620 302 660 330 600 372zM575 405L635 368 725 445 650 490zM655 365L685 350 710 378 690 390zM695 400L720 380 775 418 725 440zM520 435L565 412 600 460 565 475zM570 485L605 460 645 500 620 515zM615 525L660 500 730 590 695 608zM665 500L715 482 785 555 740 572zM715 475L750 450 785 480 750 498zM775 535L815 510 830 525 795 545zM810 495L845 472 878 495 840 515zM752 590L895 505 990 575 825 662zM705 625L745 592 785 625 740 655zM745 655L790 628 822 660 780 695zM785 710L860 668 890 692zM340 400L405 357 450 400 385 440zM355 470L380 452 405 475 375 490zM430 495L505 450 535 480 470 528zM260 445L280 430 290 442 270 455zM295 425L315 405 330 425 310 440z"/>
          <path d="M105 590L200 532 258 578 180 628zM125 520L165 495 195 518 155 545zM190 485L215 472 230 490 210 500zM230 525L245 515 285 550 270 562zM80 555L120 535 130 550 90 575zM280 580L325 565 405 640 350 665zM260 655L300 632 345 665 325 685zM340 690L405 650 455 690 410 715zM415 715L455 695 490 725 450 728zM195 630L260 590 280 600 240 635zM510 665L550 645 580 665 535 692zM620 680L680 632 765 710 640 725zM915 640L935 620 955 635 935 655zM970 625L1000 610 1012 620 985 645zM940 665L965 655 990 650 960 685zM615 570L630 565 660 610 645 615zM400 590L415 580 440 610 425 615zM430 575L445 568 468 595 450 600zM440 640L455 622 490 655 470 668z"/>
          <path d="M820 820L975 802V825L830 845zM980 798L1120 775 1165 825 980 825zM1150 772L1240 758 1258 795 1190 825zM1195 830L1260 800 1310 765 1345 780 1270 830zM800 865L900 845 1080 825 1185 830 1080 858 960 860zM1265 850L1300 838 1400 850 1435 890 1380 900 1290 880zM1390 845L1410 825 1475 880 1460 890zM1485 835L1590 845V900L1500 895zM1345 782L1390 795 1470 835zM425 855L450 848 620 835 600 850 430 868zM645 848L690 842 790 855 770 865H645zM1225 850L1255 855 1240 868z"/>
          <path d="M55 790L90 765 105 790 75 825zM22 890L50 835 70 860 40 895zM10 1260H72V1345H10zM80 1260H165L150 1280H80zM95 1310L120 1290 145 1310 135 1340H95zM100 1065L140 1060V1110H98zM60 1180L70 1120 130 1125 195 1155 190 1200 145 1240H70zM62 1178L120 1160 150 1150 190 1170 110 1205 65 1208zM175 1395L210 1305 310 1303V1398zM205 1325L215 1303H285L275 1335zM280 1165L320 1065 400 1075 398 1155 345 1180zM415 1150L420 1080 500 1055 565 1100 500 1145 450 1165zM370 1180L430 1168 500 1175 520 1205 510 1240 485 1270V1295L375 1290zM325 1050L385 1050 450 1040 580 955 620 965 540 1045 450 1075zM510 1030L595 950 630 1010 580 1050 605 1070 590 1095zM480 1070L500 1050 560 1090 535 1115zM340 1030L365 975 390 990 370 1035zM400 1010L410 985 455 980 440 1020zM480 940L530 900 560 900 565 935 500 960zM565 895H640V915H570zM655 897H755V925H700zM600 985L630 960 635 1005zM360 960L390 920 400 945 385 970zM670 1030L715 1035 710 1055H755L765 1120 690 1118 675 1080zM575 1285L640 1275 645 1290 590 1310zM600 1318L630 1325 675 1360 615 1382zM350 1385L415 1388 400 1400H355zM420 925l30-20 20 5-15 15z"/>
          <path d="M1050 1185L1110 1130 1130 1095 1190 1085 1270 1095 1310 1140 1290 1155 1200 1135 1120 1160zM1090 1185L1150 1155 1180 1160 1160 1200 1090 1200zM1260 1005L1330 990 1350 1080 1320 1080zM1320 1155L1350 1090 1400 1085 1460 1110 1400 1150zM1265 1225L1310 1190 1395 1165 1400 1190 1370 1210 1330 1240 1285 1240zM1340 970H1370L1350 1030zM1370 1010L1410 975 1440 1010 1420 1040 1365 1040zM1360 1045L1450 1060 1440 1075 1365 1065zM1445 1050L1470 975 1495 990V1030L1515 1060 1475 1085zM1110 1010L1150 990 1160 1030 1125 1040zM1180 985L1195 965 1215 995zM1000 945L1045 965 1005 980zM945 900L980 905V935L945 930zM870 1180L895 1162 940 1175 945 1195 910 1210zM685 1250L690 1215 750 1210 790 1180 740 1240zM1030 1300L1060 1285 1150 1275 1170 1320 1200 1350 1190 1385 1110 1375 1040 1350zM1050 1270L1080 1245 1145 1260 1135 1285zM1110 1330L1120 1295 1140 1310 1135 1335zM1150 1285L1185 1310 1165 1320zM1060 1375L1150 1380 1130 1405H1080zM1210 1390L1240 1355 1290 1355 1310 1405H1215zM1500 1160L1590 1145V1200L1505 1200zM1010 1170L1045 1155 1040 1175zM740 960L755 935V975zM40 1010L75 1000 100 1025 45 1030zM990 1285L1015 1265 1020 1290z"/>
        </g>
        <path class="blk" d="M80 225L180 165 275 230 150 300zM20 300L85 355 65 365 18 320zM300 175L365 180 320 210zM385 440L470 395 480 440 410 480zM280 465L350 440 400 510 350 550 310 500zM480 545L530 510 570 530 490 560zM500 590L590 560 640 640 600 660zM500 725l8-3 50 48-8 6zM660 325L720 305 725 312 680 345zM785 430L830 470 822 476zM765 262l35 8-5 20-25-12zM905 370l30 8-3 12-20-6zM930 405l30 6-3 14-20-8zM1040 490l28 10v10l-24-8zM165 18l22 4-4 10zM225 34l22 4-3 8zM18 725l25-5-5 18zM45 710l28 5-8 6zM590 680l20 3-6 12zM282 130h16v8zM220 655l16 6-8 6zM240 335h10v8zM350 545L390 520 430 560 390 585zM400 500L430 480 500 570 470 585zM470 600L500 585 560 650 520 660zM570 550L610 545 650 600 630 620zM620 650L650 632 700 690 660 700zM290 380l30-5 10 20-40 60-20-5z"/>
        <g fill="none" stroke="#fff" stroke-width="4"><path d="M90 270L200 190M120 290L240 205M130 200L190 270M165 175L225 245M540 570L620 650M510 600L590 660M520 530L560 560M380 560L470 610M430 430L460 465M400 450L430 480M310 450L370 540M330 510L400 480M350 560L520 480M420 600L560 520M460 640L600 560M390 530L450 600M440 510L520 600"/></g>
        <path fill="none" stroke="#31c45c" stroke-width="8" stroke-dasharray="9 12" d="M105 220L200 280M40 300L75 350M300 470L350 530M350 210L420 215M390 540L480 640M545 590L620 640M470 570L500 660M640 680L740 700M410 500L490 575M120 260L220 190M500 640L560 640"/>
      </g>
    </svg>
  </div>
  <footer class="status"><div class="locator"><svg><use href="#mag"/></svg><span class="t-loc">위치를 찾으려면 입력하세요 (Ctrl+K)</span></div><span class="coord">좌표</span><div class="cbox">26°,</div><div class="sbox a"></div><div class="sbox b"></div></footer>
</div>

<div class="dialog">
  <header><svg class="logo"><use href="#q"/></svg><span class="t-dlg">레이어 속성 — <span>Total.JUSURBALL.20230801.TL_SGCO_RNADR_ALL.11000</span> — 심볼</span><svg class="xx"><use href="#x"/></svg></header>
  <div class="body">
    <aside>
      <div class="find"><svg><use href="#mag"/></svg></div>
      <div class="side">
        <ul>
          <li><svg viewBox="0 0 32 32"><use href="#info"/><text x="11" y="26" font-size="28" class="serif" font-weight="bold" font-style="italic" fill="#fff">i</text></svg><span>정보</span></li>
          <li><svg><use href="#src"/></svg><span>원본</span></li>
          <li class="sel"><svg><use href="#brushc"/></svg><span>심볼</span></li>
          <li><svg viewBox="0 0 32 32"><use href="#lab"/><text x="8" y="20" font-size="11.500" class="latin" font-weight="bold" fill="#333" textLength="21">abc</text></svg><span>라벨</span></li>
          <li><svg viewBox="0 0 32 32"><use href="#mask"/><text x="2" y="20.500" font-size="15" class="latin" font-weight="bold" fill="#333" textLength="27">abc</text></svg><span>마스크</span></li>
          <li><svg><use href="#cube"/></svg><span>3D 뷰</span></li>
          <li><svg><use href="#diag"/></svg><span>도표</span></li>
          <li><svg><use href="#field"/></svg><span>필드</span></li>
          <li><svg><use href="#form"/></svg><span>속성 양식</span></li>
          <li><svg><use href="#join"/></svg><span>결합</span></li>
          <li><svg><use href="#aux"/></svg><span>보조 저장소</span></li>
          <li><svg><use href="#act"/></svg><span>액션</span></li>
          <li><svg><use href="#tip"/></svg><span>디스플레이</span></li>
          <li><svg><use href="#brush"/></svg><span>렌더링</span></li>
          <li><svg><use href="#clock"/></svg><span>시계열</span></li>
          <li><svg viewBox="0 0 32 32"><text x="5" y="27" font-size="50" class="serif" fill="#6a3a75">ε</text></svg><span>변수</span></li>
          <li><svg><use href="#elev"/></svg><span class="en">Elevation</span></li>
          <li><svg><use href="#meta"/></svg><span>메타데이터</span></li>
        </ul>
        <div class="vbar"><div class="cap"><i class="up"></i></div><div class="seg light"></div><div class="seg grey"></div><div class="cap"><i class="dn"></i></div></div>
      </div>
    </aside>
    <main>
      <div class="combo renderer"><svg><use href="#single"/></svg><span>단일 심볼</span><i class="dn"></i></div>
      <div class="symrow">
        <div class="preview"><i></i></div>
        <div class="symtree">
          <div class="r1"><i class="dn"></i><i class="sw2"></i><strong>채우기</strong></div>
          <div class="r2"><i class="sw2"></i><span>단순 채우기</span></div>
        </div>
        <div class="btns"><button><svg><use href="#badd"/></svg></button><button class="off"><svg><use href="#bup"/></svg></button><button class="off"><svg><use href="#bdel"/></svg></button><button class="off"><svg><use href="#bdn"/></svg></button><button class="off"><svg><use href="#bdup"/></svg></button><button class="off"><svg><use href="#block"/></svg></button></div>
      </div>
      <hr class="h1">
      <div class="frow color"><label>색상</label><div class="cbtn"><i></i></div><div class="cdrop"><i class="dn"></i></div></div>
      <div class="frow opac"><label>불투명도</label><div class="slider"><i></i><b></b></div><div class="spin"><span>100,0 %</span><div><i class="up"></i><i class="dn"></i></div></div><svg><use href="#dd"/></svg></div>
      <div class="frow unit"><label>단위</label><div class="combo"><span>밀리미터</span><i class="dn"></i></div></div>
      <hr class="h2">
      <div class="frow search"><div class="sfield"><svg class="mg"><use href="#mag"/></svg><span>Colorful</span><svg class="cl"><use href="#clr"/></svg><div><i class="dn"></i></div></div><svg class="st" viewBox="0 0 32 32"><use href="#style"/><text x="19" y="29" font-size="17" class="latin" fill="#444">a</text></svg></div>
      <div class="gallery">
        <div class="gin"><h3 class="e">Project Styles</h3><h3 class="k">기본값</h3><div class="pats"><i class="blue"></i><i class="brown"></i></div></div>
        <div class="vbar"><div class="cap"><i class="up"></i></div><div class="seg light"></div><div class="seg grey"></div><div class="cap"><i class="dn"></i></div></div>
      </div>
      <div class="views"><b class="on"><svg><use href="#gridv"/></svg></b><b><svg><use href="#listv"/></svg></b><button class="w1">심볼 저장⋯</button><button class="w2"><span>확장</span><i class="dn"></i></button></div>
      <div class="rend"><i class="rt"></i><strong>레이어 렌더링</strong></div>
      <div class="foot"><button class="stl"><span>스타일</span><i class="dn"></i></button><button>확인</button><button>취소</button><button class="def">적용</button><button>도움말</button></div>
    </main>
  </div>
</div>
</body>
</html>
```
FILE: styles.css
```css
/* 1rem = 10 layout units; the page is 156.8rem wide */
html { font-size: 26.1224px; }
* { box-sizing: border-box; margin: 0; padding: 0; }
body {
  width: 4096px; height: 2224px; overflow: hidden; position: relative;
  font-family: "Open Sans", "Noto Sans CJK KR", sans-serif;
  font-size: 1.65rem; line-height: 2.2rem; color: #000; background: #f0f0f0;
  white-space: nowrap;
}
.sprite { position: absolute; width: 0; height: 0; }
.latin { font-family: "Open Sans", sans-serif; letter-spacing: 0; }
.serif { font-family: "Liberation Serif", serif; letter-spacing: 0; }
svg { display: block; flex: none; }
ul { list-style: none; }
i, em, b { flex: none; font-style: normal; }
button { font: inherit; color: #000; }

/* triangles */
.dn, .up { width: 1rem; height: .6rem; background: #555; clip-path: polygon(0 0, 100% 0, 50% 100%); }
.up { clip-path: polygon(50% 0, 100% 100%, 0 100%); }
.lf, .rt { width: .6rem; height: 1rem; background: #444; clip-path: polygon(100% 0, 100% 100%, 0 50%); }
.rt { clip-path: polygon(0 0, 100% 50%, 0 100%); }
.pale { background: #9a9a9a; }

/* main window */
.window { height: 100%; display: flex; flex-direction: column; border-left: .23rem solid #fff; }
.titlebar { height: 3.87rem; background: #fff; display: flex; align-items: center; padding-left: .88rem; color: #999; flex: none; }
.logo { width: 2.06rem; height: 2.06rem; }
.t-title { margin-left: .55rem; letter-spacing: .012rem; }
.menubar { height: 2.6rem; display: flex; align-items: center; padding-left: 1.3rem; color: #a0a0a0; border-bottom: .12rem solid #c9c9c9; flex: none; }
.menubar u { text-underline-offset: .15rem; }
.m1 { width: 10.15rem; letter-spacing: .05rem; } .m2 { width: 7.4rem; letter-spacing: .03rem; } .m3 { width: 7.5rem; } .m4 { width: 8.8rem; }
.m5 { width: 7.35rem; } .m6 { width: 10.6rem; letter-spacing: .02rem; } .m7 { width: 7.75rem; } .m8 { letter-spacing: .02rem; }
.toolbar { height: 5.3rem; flex: none; display: flex; align-items: center; padding-top: .1rem; background: linear-gradient(#fbfbfb, #ededed); border-bottom: .12rem solid #b4b4b4; overflow: hidden; }
.toolbar b { width: 4.3rem; height: 4.1rem; display: flex; align-items: center; justify-content: center; }
.toolbar svg { width: 3.2rem; height: 3.2rem; overflow: visible; }
.toolbar em { width: 1.4rem; display: flex; justify-content: center; }
.toolbar .nudge { padding-left: .4rem; }
.toolbar .on { border: .1rem solid #a3a3a3; border-radius: .3rem; background: #dcdcdc; }
.toolbar .dim { opacity: .3; }
.tb2 { padding-top: .25rem; }
.grip { height: 2.8rem; background: radial-gradient(circle, #aaa 28%, transparent 34%) center / .32rem .33rem; background-clip: content-box; }
.g0 { width: 1.62rem; padding: 0 .45rem 0 .75rem; }
.g1 { width: 2.3rem; padding: 0 .95rem; }
.g2 { width: 2.4rem; padding: 0 1rem; }

.work { flex: none; height: 64.55rem; display: flex; }
.docks { width: 42.4rem; display: flex; flex-direction: column; }
.dock { display: flex; flex-direction: column; }
.dockhead { height: 2.4rem; display: flex; align-items: center; gap: .28rem; padding: 0 .1rem 0 .4rem; }
.dockhead span { flex: 1; }
.dockhead svg { width: 1.22rem; height: 1.22rem; }
.docktools { height: 4.4rem; display: flex; align-items: center; padding: 0 0 .25rem .5rem; }
.docktools b { width: 3.45rem; display: flex; justify-content: center; }
.docktools em { width: 1.45rem; display: flex; justify-content: center; }
.docktools svg { width: 2.4rem; height: 2.4rem; overflow: visible; }
.docktools .inf { width: 2.15rem; height: 2.15rem; }
.docktools .sm { width: 2.3rem; height: 1.9rem; }
.tree { height: 34.8rem; background: #fff; border: .1rem solid #b4b4b4; border-left: 0; display: flex; }
.tree ul { flex: 1; padding-top: .12rem; }
.tree li { height: 2.722rem; display: flex; align-items: center; padding-left: 2.3rem; gap: .7rem; position: relative; font-size: 1.6rem; letter-spacing: -.042rem; word-spacing: .2rem; }
.tree li svg { width: 2.5rem; height: 2.5rem; }
.parent::before { content: ""; position: absolute; left: .7rem; width: .55rem; height: 1.1rem; background: #444; clip-path: polygon(0 0, 100% 50%, 0 100%); }
.vbar { width: 1.8rem; display: flex; flex-direction: column; border-left: .1rem solid #b4b4b4; }
.vbar .cap { height: 1.75rem; display: flex; align-items: center; justify-content: center; background: linear-gradient(90deg, #fff, #f0f0f0); }
.grey { background: #e5e5e5; }
.vbar .light { background: linear-gradient(90deg, #f2f2f2, #fff); }
.vbar .seg { border-top: .1rem solid #b4b4b4; }
.vbar .cap:last-child { border-top: .1rem solid #b4b4b4; }
.tree .grey { height: 13.4rem; }
.tree .light, .side .light { flex: 1; }
.split { height: 1rem; display: flex; justify-content: center; align-items: center; }
.split::before { content: ""; width: 1.6rem; height: .15rem; background: repeating-linear-gradient(90deg, #aaa 0 .12rem, transparent .12rem .3rem); }
.vsplit { width: 1.08rem; display: flex; align-items: center; justify-content: center; border-right: .12rem solid #b4b4b4; }
.vsplit::before { content: ""; width: .15rem; height: 1.7rem; margin-top: .4rem; background: repeating-linear-gradient(#aaa 0 .12rem, transparent .12rem .3rem); }

.layers { position: relative; }
.layers .dockhead { height: 2.15rem; }
.layers .docktools { height: 4.6rem; padding-bottom: 0; }
.layerlist { height: 13.3rem; background: #fff; border-top: .1rem solid #b4b4b4; border-right: .1rem solid #b4b4b4; }
.row { height: 2.3rem; display: flex; align-items: center; padding-left: 3.5rem; position: relative; overflow: hidden; font-weight: bold; font-size: 1.6rem; letter-spacing: -.012rem; }
.cur { background: #efefef; text-decoration: underline; text-decoration-thickness: .12rem; text-underline-offset: .2rem; }
.cb { width: 1.7rem; height: 1.7rem; background: #fff; border: .1rem solid #b4b4b4; }
.sw { width: 2.2rem; height: 2.2rem; border: .1rem solid #2a2a2a; margin-left: .65rem; margin-right: .65rem; }
.c1 { background: #33c65c; width: 2.02rem; height: 2rem; }
.c2 { background: #7f8d92; }
.c3 { background: #a5735a; }
.crs { position: absolute; left: 39.6rem; top: .15rem; width: 1.95rem; height: 1.95rem; background: rgba(250,250,250,.96); border: .08rem solid #e2e2e2; border-radius: .3rem; }
.hbar { height: 1.82rem; display: flex; border: .1rem solid #b4b4b4; border-left: 0; }
.hbar .cap { width: 1.75rem; display: flex; align-items: center; justify-content: center; background: #f9f9f9; }
.hbar .light { flex: 1; border-left: .1rem solid #b4b4b4; background: linear-gradient(#f2f2f2, #fff); }
.hbar .grey { width: 7.2rem; border-left: .1rem solid #b4b4b4; border-right: .1rem solid #b4b4b4; }
.redbox { position: absolute; left: -.23rem; top: 2.65rem; width: 5.05rem; height: 4rem; border: .5rem solid #f00; }

.map { width: 26.62rem; height: 64.25rem; margin-top: .15rem; }
.map .par path { fill: #33c65c; stroke: #232323; stroke-width: 3px; stroke-linejoin: round; vector-effect: non-scaling-stroke; }
.map .blk { fill: #232323; stroke: #232323; stroke-width: 1; stroke-linejoin: round; }

.status { flex: 1; display: flex; align-items: center; padding-left: .37rem; color: #000; }
.locator { width: 54.7rem; height: 3.05rem; background: #fff; border: .1rem solid #aaa; border-radius: .35rem; display: flex; align-items: center; padding-left: 1.1rem; color: #848484; }
.locator svg { width: 2rem; height: 2rem; }
.t-loc { margin-left: .95rem; letter-spacing: .02rem; }
.coord { margin-left: 8.8rem; width: 3.1rem; }
.cbox { width: 15rem; height: 3.05rem; border: .1rem solid #aaa; border-radius: .35rem; background: #fff; padding: .35rem .5rem; letter-spacing: -.06rem; }
.sbox { height: 3.05rem; border: .1rem solid #aaa; border-radius: .35rem; }
.sbox.a { width: 11.9rem; margin-left: 19.7rem; }
.sbox.b { width: 11.2rem; margin-left: 4.7rem; }

/* layer properties dialog */
.dialog { position: absolute; left: 70.23rem; top: .12rem; width: 86.57rem; height: 84.55rem; background: #f0f0f0; border: .1rem solid #5c5f5e; box-shadow: 0 .2rem 1.3rem rgba(0,0,0,.5); display: flex; flex-direction: column; overflow: hidden; }
.dialog > header { height: 3.87rem; background: #fff; display: flex; align-items: center; padding-left: .95rem; flex: none; }
.t-dlg { margin-left: .6rem; flex: 1; word-spacing: .13rem; }
.t-dlg span { font-size: 1.6rem; letter-spacing: -.057rem; }
.xx { width: 1.3rem; height: 1.3rem; margin-right: 1.6rem; }
.body { flex: 1; display: flex; min-height: 0; }
aside { width: 20.4rem; display: flex; flex-direction: column; background: #5b5b5b; min-height: 0; }
.find { height: 3.1rem; background: #fff; border: .08rem solid #999; border-radius: .3rem; display: flex; align-items: center; padding-left: 1.1rem; flex: none; }
.find svg { width: 2.1rem; height: 2.1rem; }
.side { flex: 1; display: flex; min-height: 0; margin-top: .95rem; }
.side ul { width: 18.65rem; overflow: hidden; color: #fff; letter-spacing: .06rem; word-spacing: .08rem; }
.side li { height: 4.285rem; display: flex; align-items: center; padding-left: .6rem; gap: .85rem; }
.side li svg { width: 3rem; height: 3rem; overflow: visible; }
.side .en { font-size: 1.6rem; letter-spacing: -.04rem; }
.side .sel { background: #f0f0f0; color: #000; padding-left: .9rem; }
.side .vbar { width: 1.75rem; border-left: 0; background: #fff; }
.side .grey { height: 16.7rem; }

main { flex: 1; padding: .36rem .3rem 0 .67rem; min-width: 0; display: flex; flex-direction: column; }
.combo { display: flex; align-items: center; border: .1rem solid #a9a9a9; border-radius: .3rem; background: linear-gradient(#fff, #ececec); padding: 0 1rem 0 .4rem; }
.combo span { flex: 1; }
.renderer { height: 3.31rem; width: 64.99rem; flex: none; padding-left: .85rem; }
.renderer span { letter-spacing: .03rem; }
.renderer svg { width: 2.15rem; height: 2.35rem; margin-right: .35rem; }
.symrow { display: flex; margin-top: .98rem; height: 19.75rem; flex: none; }
.preview { width: 20.74rem; padding: 6.62rem 0 0 6.72rem; }
.preview i { display: block; width: 6.35rem; height: 6.42rem; background: #33c65c; border: .13rem solid #232323; }
.symtree { width: 34.62rem; background: #fff; border: .1rem solid #b4b4b4; }
.r1, .r2 { height: 2.3rem; display: flex; align-items: center; }
.r1 { background: #efefef; padding-left: 1.1rem; }
.sw2 { width: 1.98rem; height: 1.98rem; background: #33c65c; border: .1rem solid #232323; }
.r1 .sw2 { margin: 0 .6rem 0 1.4rem; }
.r2 { padding-left: 6.6rem; letter-spacing: .06rem; }
.r2 .sw2 { margin-right: .6rem; }
.btns { margin: .9rem 0 0 .97rem; display: grid; grid-template-columns: 3.85rem 3.85rem; grid-auto-rows: 3.23rem; gap: 1.39rem .96rem; align-content: start; }
button { border: .1rem solid #a2a2a2; border-radius: .3rem; background: linear-gradient(#fff, #ededed); display: flex; align-items: center; justify-content: center; }
button svg { width: 2.25rem; height: 2.25rem; }
.off { border-color: #c3c3c3; }
hr { border: 0; height: .17rem; background: linear-gradient(#a6a6a6 60%, #fff 60%); flex: none; }
.h1 { width: 64.99rem; margin-top: .97rem; }
.h2 { width: 63.61rem; margin-top: .45rem; }
.frow { display: flex; align-items: center; width: 63.61rem; flex: none; }
.frow label { width: 7.22rem; }
.color { height: 2.96rem; margin-top: 1.1rem; }
.cbtn { width: 54.79rem; height: 100%; border: .1rem solid #a9a9a9; border-radius: .3rem; background: #fafafa; padding: .18rem .42rem .16rem; }
.cbtn i { display: block; height: 100%; background: #33c65c; border-radius: .25rem; }
.cdrop { flex: 1; height: 100%; border: .1rem solid #a9a9a9; border-radius: .3rem; background: linear-gradient(#fff, #ededed); display: flex; align-items: center; justify-content: center; }
.opac { height: 3.09rem; margin-top: 1.12rem; }
.slider { width: 40.75rem; display: flex; align-items: center; }
.slider i { flex: 1; height: .65rem; background: linear-gradient(#1b6fc0, #0d84ea 40%, #2f9cf5 70%, #1266b4); border-radius: .15rem; }
.slider b { width: 1.65rem; height: 1.65rem; border: .1rem solid #b0b0b0; border-radius: .25rem; background: #fff; }
.spin { margin-left: .5rem; width: 10.43rem; height: 100%; border: .1rem solid #a9a9a9; border-radius: .3rem; background: #fff; display: flex; align-items: center; padding-left: .5rem; }
.spin span { flex: 1; letter-spacing: -.07rem; }
.spin div { width: 1.8rem; height: 100%; border-left: .1rem solid #b4b4b4; display: flex; flex-direction: column; align-items: center; justify-content: space-evenly; }
.spin .up { background: #aaa; }
.opac svg { width: 3rem; height: 2.5rem; margin-left: 1.4rem; overflow: visible; }
.unit { height: 2.34rem; margin-top: 1.09rem; }
.unit .combo { flex: 1; height: 100%; letter-spacing: .03rem; }
.search { height: 2.34rem; margin-top: .99rem; position: relative; }
.sfield { width: 59.65rem; height: 100%; border: .1rem solid #a9a9a9; border-radius: .3rem; background: #fff; display: flex; align-items: center; padding-left: 1.35rem; }
.sfield span { flex: 1; margin-left: .7rem; font-size: 1.55rem; letter-spacing: -.06rem; }
.sfield .mg { width: 2rem; height: 2rem; }
.sfield .cl { width: 2.1rem; height: 1.55rem; margin-right: 1.1rem; }
.sfield div { width: 2.6rem; height: 100%; background: linear-gradient(#fff, #f0f0f0); display: flex; align-items: center; justify-content: center; padding-right: .2rem; }
.st { width: 2.4rem; height: 2.4rem; margin-left: 1.15rem; }
.search::before { content: ""; position: absolute; left: -.45rem; width: .15rem; height: 1.5rem; background: repeating-linear-gradient(#aaa 0 .12rem, transparent .12rem .3rem); }
.gallery { width: 63.61rem; height: 25.28rem; margin-top: .86rem; flex: none; background: #fff; border: .1rem solid #b4b4b4; display: flex; }
.gin { flex: 1; padding: .9rem .95rem 0 .55rem; }
.gin h3 { font-size: 2.12rem; line-height: 2.85rem; height: 2.78rem; border-bottom: .1rem solid #c4c4c4; }
.gin .k { margin-top: .9rem; font-size: 2.35rem; line-height: 2.7rem; }
.pats { display: flex; padding: 3.22rem 0 0 6.05rem; gap: 12.63rem; }
.pats i { width: 11.98rem; height: 10.26rem; border: .1rem solid #2b5f8a; background: linear-gradient(#2f6ea1, #48a8f4); }
.pats .brown { border-color: #b0602f; background: linear-gradient(#532813, #b05a2b); }
.gallery .light { height: 3.5rem; background: #fff; }
.gallery .grey { flex: 1; }
.views { display: flex; align-items: center; height: 3.21rem; margin-top: .66rem; width: 63.61rem; flex: none; }
.views b { width: 3.28rem; height: 100%; display: flex; align-items: center; justify-content: center; }
.views .on { border: .1rem solid #a3a3a3; border-radius: .3rem; background: #dcdcdc; }
.views svg { width: 2.15rem; height: 2.15rem; }
.views button { height: 2.47rem; }
.w1 { width: 9.2rem; margin-left: auto; letter-spacing: .03rem; }
.w2 { width: 8.3rem; margin-left: .68rem; letter-spacing: .06rem; }
.w2 span { margin: 0 1.8rem 0 1rem; }
.rend { display: flex; align-items: center; margin-top: 3.1rem; height: 2.2rem; padding-left: .45rem; flex: none; letter-spacing: .13rem; }
.rend .rt { width: .8rem; height: 1.2rem; margin-right: 1.25rem; }
.foot { display: flex; gap: 1rem; margin-top: 1.1rem; height: 2.52rem; width: 65.01rem; flex: none; }
.foot button { width: 8.33rem; height: 100%; }
.foot .stl { margin-right: auto; gap: 1.4rem; padding-left: .1rem; }
.foot .def { border-color: #3daee9; background: linear-gradient(#fff, #e2eaf4); }
```
